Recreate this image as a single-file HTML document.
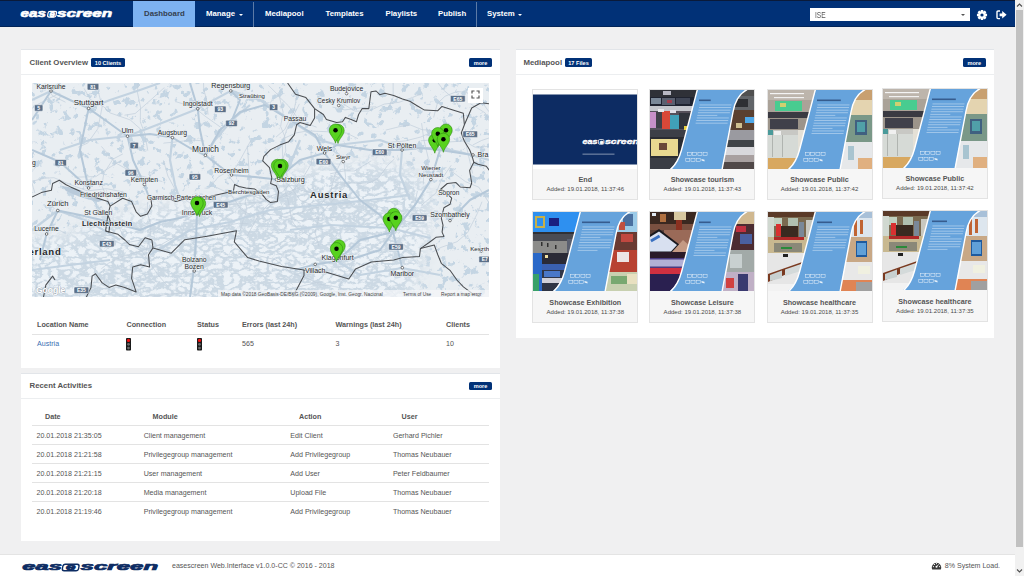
<!DOCTYPE html>
<html><head><meta charset="utf-8">
<style>
*{box-sizing:border-box;margin:0;padding:0}
html,body{width:1024px;height:576px;overflow:hidden}
body{background:#f0f0f1;font-family:"Liberation Sans",sans-serif;color:#555;position:relative}
.a{position:absolute;white-space:nowrap}
#nav{position:absolute;left:0;top:0;width:1015px;height:27px;background:#013177;border-top:1px solid #0a1a3a;border-bottom:1px solid #012458}
.ni{position:absolute;top:0;height:26px;line-height:26px;font-size:7.8px;font-weight:bold;color:#fff}
.sep{position:absolute;top:1px;width:1px;height:25px;background:#5c7aa6}
.caret{position:absolute;width:0;height:0;border-left:2.3px solid transparent;border-right:2.3px solid transparent;border-top:2.6px solid #fff}
.panel{position:absolute;background:#fff;border-top:1px solid #e2e5e9}
.ptitle{position:absolute;font-size:7.8px;font-weight:bold;color:#555;white-space:nowrap}
.badge{position:absolute;background:#013177;color:#fff;font-size:5.6px;font-weight:bold;border-radius:1.5px;text-align:center;white-space:nowrap}
.phr{position:absolute;left:0;right:0;height:1px;background:#eceef0}
.more{position:absolute;background:#013177;color:#fff;font-size:5.6px;font-weight:bold;border-radius:1.5px;text-align:center;line-height:10px}
.th{position:absolute;font-size:7.2px;font-weight:bold;color:#555;white-space:nowrap}
.td{position:absolute;font-size:7.1px;color:#555;white-space:nowrap}
.tl{position:absolute;height:1px;background:#e3e3e3}
.card{position:absolute;width:106px;height:111.5px;border:1px solid #e3e3e3;background:#f6f6f6}
.cap{position:absolute;left:0;top:79px;width:104px;height:31.5px}
.ct{position:absolute;left:0;width:104px;top:6.8px;text-align:center;font-size:7.2px;font-weight:bold;color:#555;white-space:nowrap}
.cd{position:absolute;left:0;width:104px;top:17.6px;text-align:center;font-size:6.05px;color:#4a4a4a;white-space:nowrap}
#footer{position:absolute;left:0;top:554px;width:1015px;height:22px;background:#fff;border-top:1px solid #e4e4e4}
#sb{position:absolute;left:1015px;top:0;width:9px;height:576px;background:#f1f1f1}
</style></head><body>

<!-- NAVBAR -->
<div id="nav">
  <svg class="a" style="left:0;top:0" width="130" height="26" viewBox="0 0 130 26">
    <g font-family="Liberation Sans" font-weight="bold" font-style="italic" font-size="11.2" fill="#fff" stroke="#fff" stroke-width="0.6">
    <text x="20.6" y="16.1" textLength="25.4" lengthAdjust="spacingAndGlyphs">eas</text>
    <text x="49.4" y="15.6" font-size="8.6" textLength="5.4" lengthAdjust="spacingAndGlyphs">e</text>
    <text x="57" y="16.1" textLength="55.2" lengthAdjust="spacingAndGlyphs">screen</text>
    </g>
    <rect x="47.8" y="10.3" width="8.4" height="5.8" rx="1.8" fill="none" stroke="#fff" stroke-width="1.2" transform="skewX(-10) translate(2.4,0)"/>
  </svg>
  <div style="position:absolute;left:133px;top:0;width:62px;height:26px;background:#7db2f1"></div>
  <div class="ni" style="left:144px;color:#34404f">Dashboard</div>
  <div class="ni" style="left:206px">Manage</div>
  <div class="caret" style="left:238.5px;top:13px"></div>
  <div class="sep" style="left:253px"></div>
  <div class="ni" style="left:265px">Mediapool</div>
  <div class="ni" style="left:325.5px">Templates</div>
  <div class="ni" style="left:385.5px">Playlists</div>
  <div class="ni" style="left:438px">Publish</div>
  <div class="sep" style="left:476px"></div>
  <div class="ni" style="left:487px">System</div>
  <div class="caret" style="left:517.5px;top:13px"></div>
  <div style="position:absolute;left:810px;top:7px;width:160px;height:13.3px;background:#fff"></div>
  <div class="a" style="left:814.5px;top:8.2px;line-height:13px;font-size:8.2px;color:#555;transform:scaleX(0.81);transform-origin:0 0">ISE</div>
  <div class="caret" style="left:961px;top:13px;border-top-color:#555"></div>
  <svg class="a" style="left:976.2px;top:8.2px" width="12" height="12" viewBox="0 0 12 12"><g transform="translate(6,6)" fill="#fff"><polygon points="5.07,-1.13 5.07,1.13 3.65,1.37 3.55,1.61 4.39,2.79 2.79,4.39 1.61,3.55 1.37,3.65 1.13,5.07 -1.13,5.07 -1.37,3.65 -1.61,3.55 -2.79,4.39 -4.39,2.79 -3.55,1.61 -3.65,1.37 -5.07,1.13 -5.07,-1.13 -3.65,-1.37 -3.55,-1.61 -4.39,-2.79 -2.79,-4.39 -1.61,-3.55 -1.37,-3.65 -1.13,-5.07 1.13,-5.07 1.37,-3.65 1.61,-3.55 2.79,-4.39 4.39,-2.79 3.55,-1.61 3.65,-1.37"/><circle r="1.6" fill="#013177"/></g></svg>
  <svg class="a" style="left:996px;top:8.9px" width="12" height="10" viewBox="0 0 12 10"><path d="M4,1 H2 Q1,1 1,2 V7.6 Q1,8.6 2,8.6 H4" fill="none" stroke="#fff" stroke-width="1.4"/><path d="M3.6,3.4 H6.2 V1 L10.6,4.8 L6.2,8.6 V6.2 H3.6 Z" fill="#fff"/></svg>
</div>

<!-- SCROLLBAR -->
<div id="sb">
  <div style="position:absolute;left:1px;top:10px;width:7px;height:537px;background:#c1c1c1"></div>
  <svg class="a" style="left:0;top:2px" width="9" height="6" viewBox="0 0 9 6"><path d="M2,4.5 L4.5,2 L7,4.5" fill="none" stroke="#505050" stroke-width="1.1"/></svg>
  <svg class="a" style="left:0;top:568px" width="9" height="6" viewBox="0 0 9 6"><path d="M2,1.5 L4.5,4 L7,1.5" fill="none" stroke="#505050" stroke-width="1.1"/></svg>
</div>

<!-- CLIENT OVERVIEW PANEL -->
<div class="panel" style="left:21px;top:49px;width:479px;height:319px">
  <div class="ptitle" style="left:8.5px;top:8px">Client Overview</div>
  <div class="badge" style="left:70px;top:8px;width:34px;height:9px;line-height:10px">10 Clients</div>
  <div class="more" style="left:448px;top:8px;width:23px;height:9px">more</div>
  <div class="phr" style="top:24px"></div>
  <div id="map" style="position:absolute;left:11px;top:33px;width:457px;height:214px;background:#dfe6ec;overflow:hidden"><svg width="457" height="214" viewBox="0 0 457 214" style="position:absolute;left:0;top:0">
<defs>
<filter id="tex" x="0" y="0" width="457" height="214" filterUnits="userSpaceOnUse" color-interpolation-filters="sRGB">
 <feTurbulence type="fractalNoise" baseFrequency="0.13" numOctaves="4" seed="7" result="n"/>
 <feColorMatrix in="n" type="matrix" values="0 0 0 0 0.77  0 0 0 0 0.835  0 0 0 0 0.89  0 0 0 12 -7.1"/>
</filter>
<filter id="tex2" x="0" y="0" width="457" height="214" filterUnits="userSpaceOnUse" color-interpolation-filters="sRGB">
 <feTurbulence type="turbulence" baseFrequency="0.11 0.16" numOctaves="3" seed="11" result="n"/>
 <feColorMatrix in="n" type="matrix" values="0 0 0 0 0.96  0 0 0 0 0.975  0 0 0 0 0.99  0 0 0 5 -0.95"/>
</filter>
<filter id="blur6"><feGaussianBlur stdDeviation="8"/></filter>
<mask id="am" maskUnits="userSpaceOnUse" x="0" y="0" width="457" height="214"><polygon points="-12.0,157.0 38.0,153.0 68.0,139.0 118.0,125.0 198.0,117.0 230.0,109.0 253.0,92.0 298.0,83.0 348.0,81.0 383.0,89.0 400.0,112.0 393.0,157.0 378.0,227.0 -12.0,227.0" fill="#fff" filter="url(#blur6)"/></mask>
<mask id="pm" maskUnits="userSpaceOnUse" x="0" y="0" width="457" height="214"><rect width="457" height="214" fill="#fff"/><polygon points="-12.0,157.0 38.0,153.0 68.0,139.0 118.0,125.0 198.0,117.0 230.0,109.0 253.0,92.0 298.0,83.0 348.0,81.0 383.0,89.0 400.0,112.0 393.0,157.0 378.0,227.0 -12.0,227.0" fill="#000" filter="url(#blur6)"/></mask>
<g id="pin"><path d="M0,0 C-0.8,-4.5 -6.2,-8.5 -6.2,-13 A6.2,6.2 0 1,1 6.2,-13 C6.2,-8.5 0.8,-4.5 0,0 Z" fill="#58d21f" stroke="#2f8a14" stroke-width="0.6"/><circle cx="0" cy="-13" r="2.25" fill="#000"/></g>
</defs>
<rect width="457" height="214" fill="#e9eef2"/>
<g mask="url(#pm)"><rect width="457" height="214" filter="url(#tex)"/></g>
<g mask="url(#am)"><rect width="457" height="214" fill="#ccd9e4"/><rect width="457" height="214" filter="url(#tex2)" opacity="0.8"/></g>
<polygon points="30.0,103.0 43.0,105.0 63.0,113.0 72.0,117.0 66.0,119.0 48.0,114.0 34.0,108.0" fill="#b9cada"/>
<polyline points="287.1,163.6 283.1,149.6 287.3,133.1 293.6,125.9 301.0,117.1 311.8,105.3 313.6,94.4 311.4,73.7" fill="none" stroke="#c2cfdb" stroke-width="0.7" stroke-linejoin="round"/>
<polyline points="355.3,27.3 361.2,14.4 361.1,-7.2 350.5,-22.7 350.0,-33.0" fill="none" stroke="#c2cfdb" stroke-width="0.7" stroke-linejoin="round"/>
<polyline points="69.4,63.4 83.4,79.8 102.2,90.2 110.0,93.2 130.4,98.6" fill="none" stroke="#c2cfdb" stroke-width="0.7" stroke-linejoin="round"/>
<polyline points="115.8,67.7 112.8,50.4 108.3,38.9 108.5,24.2 105.5,9.8 105.8,1.0 110.5,-5.8 126.2,-18.1" fill="none" stroke="#c2cfdb" stroke-width="0.7" stroke-linejoin="round"/>
<polyline points="-1.4,174.3 -14.4,180.3 -30.9,183.4 -39.9,180.0 -59.3,178.8 -74.5,178.7 -84.7,173.3 -99.4,166.4" fill="none" stroke="#c2cfdb" stroke-width="0.7" stroke-linejoin="round"/>
<polyline points="362.5,75.9 355.7,82.3 346.0,95.6 334.4,101.0 318.8,99.9 306.5,101.8 298.7,106.5" fill="none" stroke="#c2cfdb" stroke-width="0.7" stroke-linejoin="round"/>
<polyline points="61.0,151.3 69.9,153.4 89.5,160.8 107.5,157.2 118.1,152.8" fill="none" stroke="#c2cfdb" stroke-width="0.7" stroke-linejoin="round"/>
<polyline points="300.5,24.1 312.9,26.9 334.4,24.2 344.3,23.8" fill="none" stroke="#c2cfdb" stroke-width="0.7" stroke-linejoin="round"/>
<polyline points="417.6,86.8 433.5,98.7 446.8,104.2 457.7,120.8 457.8,135.2 458.2,153.4" fill="none" stroke="#c2cfdb" stroke-width="0.7" stroke-linejoin="round"/>
<polyline points="218.5,58.1 209.1,75.2 203.8,84.2 186.2,94.0 176.8,105.6" fill="none" stroke="#c2cfdb" stroke-width="0.7" stroke-linejoin="round"/>
<polyline points="235.7,118.3 218.1,111.6 203.8,102.0 195.7,91.7" fill="none" stroke="#c2cfdb" stroke-width="0.7" stroke-linejoin="round"/>
<polyline points="326.0,55.7 314.6,50.1 294.7,48.7 275.9,47.9 264.2,49.9 250.5,56.0" fill="none" stroke="#c2cfdb" stroke-width="0.7" stroke-linejoin="round"/>
<polyline points="311.3,73.4 303.1,91.2 298.1,110.4 286.7,123.9 266.3,130.2 251.5,134.5" fill="none" stroke="#c2cfdb" stroke-width="0.7" stroke-linejoin="round"/>
<polyline points="69.3,185.8 76.5,180.2 88.9,174.2 109.0,167.7 129.2,161.6 142.8,153.7 154.6,152.6" fill="none" stroke="#c2cfdb" stroke-width="0.7" stroke-linejoin="round"/>
<polyline points="465.1,35.8 456.8,28.5 446.9,14.8 433.4,9.2 424.7,8.6 413.1,13.2 405.3,20.5 401.6,34.5" fill="none" stroke="#c2cfdb" stroke-width="0.7" stroke-linejoin="round"/>
<polyline points="171.4,133.2 162.4,123.4 145.4,110.6 135.8,92.9 131.6,77.8" fill="none" stroke="#c2cfdb" stroke-width="0.7" stroke-linejoin="round"/>
<polyline points="450.0,118.7 445.3,130.5 435.6,149.6 425.1,158.7 409.1,164.4 400.3,169.1" fill="none" stroke="#c2cfdb" stroke-width="0.7" stroke-linejoin="round"/>
<polyline points="274.3,121.9 287.0,120.1 294.6,122.7 310.4,120.5 320.4,120.5" fill="none" stroke="#c2cfdb" stroke-width="0.7" stroke-linejoin="round"/>
<polyline points="290.3,198.6 275.7,201.7 258.2,205.8 239.6,213.1 228.1,224.6 217.3,230.4 211.5,236.3" fill="none" stroke="#c2cfdb" stroke-width="0.7" stroke-linejoin="round"/>
<polyline points="440.8,62.0 449.5,57.5 462.9,53.0 478.8,42.6 486.9,41.2" fill="none" stroke="#c2cfdb" stroke-width="0.7" stroke-linejoin="round"/>
<polyline points="244.0,54.1 252.9,46.4 262.2,26.6 265.4,10.4" fill="none" stroke="#c2cfdb" stroke-width="0.7" stroke-linejoin="round"/>
<polyline points="216.4,140.9 206.7,140.2 189.1,143.6 170.9,144.6" fill="none" stroke="#c2cfdb" stroke-width="0.7" stroke-linejoin="round"/>
<polyline points="2.7,71.8 -3.5,66.7 -16.2,54.5 -33.1,49.4 -47.0,50.5 -62.7,45.9 -81.2,35.3 -96.6,22.5" fill="none" stroke="#c2cfdb" stroke-width="0.7" stroke-linejoin="round"/>
<polyline points="391.3,101.3 392.0,86.8 396.3,75.4 391.9,57.0 389.6,40.1" fill="none" stroke="#c2cfdb" stroke-width="0.7" stroke-linejoin="round"/>
<polyline points="215.4,62.8 216.8,84.3 217.0,98.3 216.8,107.0 213.2,118.2 214.9,126.9 210.6,138.8 208.4,147.5" fill="none" stroke="#c2cfdb" stroke-width="0.7" stroke-linejoin="round"/>
<polyline points="183.3,103.9 198.7,111.1 208.7,126.0 219.1,132.3" fill="none" stroke="#c2cfdb" stroke-width="0.7" stroke-linejoin="round"/>
<polyline points="427.9,25.0 423.5,17.3 411.5,7.0 400.1,-7.5 387.3,-17.1 373.9,-19.5 366.2,-22.2" fill="none" stroke="#c2cfdb" stroke-width="0.7" stroke-linejoin="round"/>
<polyline points="33.6,150.4 21.7,144.5 4.0,145.9 -10.8,153.8 -29.1,163.5 -44.4,170.4" fill="none" stroke="#c2cfdb" stroke-width="0.7" stroke-linejoin="round"/>
<polyline points="115.6,119.1 115.1,129.0 118.7,141.7 118.6,152.2 114.0,168.7 118.0,185.6" fill="none" stroke="#c2cfdb" stroke-width="0.7" stroke-linejoin="round"/>
<polyline points="33.5,19.2 20.5,12.8 15.5,4.8 7.7,-8.8 -4.5,-24.5" fill="none" stroke="#c2cfdb" stroke-width="0.7" stroke-linejoin="round"/>
<polyline points="440.6,90.5 436.0,70.2 433.5,59.6 433.6,46.3" fill="none" stroke="#c2cfdb" stroke-width="0.7" stroke-linejoin="round"/>
<polyline points="388.7,57.8 401.9,56.7 414.7,59.1 431.5,58.0 443.1,64.2 464.9,62.8" fill="none" stroke="#c2cfdb" stroke-width="0.7" stroke-linejoin="round"/>
<polyline points="92.5,32.2 103.2,30.5 118.6,17.1 132.4,4.5" fill="none" stroke="#c2cfdb" stroke-width="0.7" stroke-linejoin="round"/>
<polyline points="-9.8,100.0 2.5,97.7 12.9,95.2 21.9,94.7 40.5,102.4 55.3,107.9 74.6,105.7 91.7,109.0" fill="none" stroke="#c2cfdb" stroke-width="0.7" stroke-linejoin="round"/>
<polyline points="5.8,199.7 2.6,208.0 5.5,222.1 3.3,232.0 -3.3,242.7 -8.8,252.6" fill="none" stroke="#c2cfdb" stroke-width="0.7" stroke-linejoin="round"/>
<polyline points="463.9,-2.2 459.2,-9.9 445.9,-26.9 436.7,-35.3 427.6,-43.0 417.6,-58.1 408.1,-64.3 393.1,-79.2" fill="none" stroke="#c2cfdb" stroke-width="0.7" stroke-linejoin="round"/>
<polyline points="298.1,90.8 312.1,87.9 322.5,88.0 339.3,77.8" fill="none" stroke="#c2cfdb" stroke-width="0.7" stroke-linejoin="round"/>
<polyline points="389.4,122.3 404.1,109.9 409.6,96.3 419.2,82.3" fill="none" stroke="#c2cfdb" stroke-width="0.7" stroke-linejoin="round"/>
<polyline points="227.3,172.9 243.8,176.8 260.2,190.3 277.1,195.9 286.5,200.9 307.2,204.4 315.2,209.0" fill="none" stroke="#c2cfdb" stroke-width="0.7" stroke-linejoin="round"/>
<polyline points="459.9,27.9 471.4,36.2 484.0,42.3 494.9,53.0 502.6,55.6" fill="none" stroke="#c2cfdb" stroke-width="0.7" stroke-linejoin="round"/>
<polyline points="350.7,151.1 358.8,145.4 374.0,134.1 382.2,123.2 385.4,108.0" fill="none" stroke="#c2cfdb" stroke-width="0.7" stroke-linejoin="round"/>
<polyline points="215.0,153.1 220.7,142.8 226.1,132.6 239.0,118.5 258.0,111.1 269.9,96.5 279.6,80.4 278.9,68.5" fill="none" stroke="#c2cfdb" stroke-width="0.7" stroke-linejoin="round"/>
<polyline points="438.5,20.8 453.1,29.9 461.3,46.1 463.9,57.6 461.9,70.8" fill="none" stroke="#c2cfdb" stroke-width="0.7" stroke-linejoin="round"/>
<polyline points="52.1,5.4 58.2,16.4 71.9,23.9 77.8,29.8 98.2,36.9 108.8,46.3" fill="none" stroke="#c2cfdb" stroke-width="0.7" stroke-linejoin="round"/>
<polyline points="113.1,212.6 126.2,212.9 134.3,211.4 153.8,209.8 162.9,211.5 173.1,213.8 185.7,220.4 196.0,236.5" fill="none" stroke="#c2cfdb" stroke-width="0.7" stroke-linejoin="round"/>
<polyline points="46.4,64.2 55.9,59.9 65.8,45.7 68.7,31.4 70.2,23.5 65.1,4.2 64.7,-6.7" fill="none" stroke="#c2cfdb" stroke-width="0.7" stroke-linejoin="round"/>
<polyline points="-9.5,202.7 -7.1,213.5 -2.0,223.0 3.2,234.9 4.4,246.2 7.7,257.3" fill="none" stroke="#c2cfdb" stroke-width="0.7" stroke-linejoin="round"/>
<polyline points="458.6,186.6 466.1,176.1 468.2,165.0 468.7,155.7 467.2,137.2 460.3,117.5 460.6,98.9 460.5,84.3" fill="none" stroke="#c2cfdb" stroke-width="0.7" stroke-linejoin="round"/>
<polyline points="244.6,11.3 256.4,22.8 268.1,38.2 284.6,44.2" fill="none" stroke="#c2cfdb" stroke-width="0.7" stroke-linejoin="round"/>
<polyline points="281.1,110.2 267.9,106.8 254.8,92.5 250.7,75.3 250.3,59.8 254.5,47.4 262.0,31.6 267.4,20.9" fill="none" stroke="#c2cfdb" stroke-width="0.7" stroke-linejoin="round"/>
<polyline points="27.1,10.4 8.2,20.0 -9.9,31.8 -18.3,51.0 -19.1,59.5 -10.7,79.3 -3.0,89.6 2.8,109.9" fill="none" stroke="#c2cfdb" stroke-width="0.7" stroke-linejoin="round"/>
<polyline points="278.9,121.5 268.3,117.4 259.1,104.8 253.6,99.0" fill="none" stroke="#c2cfdb" stroke-width="0.7" stroke-linejoin="round"/>
<polyline points="176.1,31.7 174.1,15.2 171.7,6.0 171.3,-9.7 174.3,-22.6" fill="none" stroke="#c2cfdb" stroke-width="0.7" stroke-linejoin="round"/>
<polyline points="413.0,39.8 407.1,46.7 398.5,49.6 388.9,54.0 373.4,57.9 356.5,59.4" fill="none" stroke="#c2cfdb" stroke-width="0.7" stroke-linejoin="round"/>
<polyline points="250.4,85.2 252.2,105.8 256.0,117.1 260.2,138.3 264.8,145.3 278.5,153.4 286.8,159.9" fill="none" stroke="#c2cfdb" stroke-width="0.7" stroke-linejoin="round"/>
<polyline points="80.8,129.1 77.5,120.9 69.9,102.7 71.8,90.4 81.0,76.1 90.9,70.9" fill="none" stroke="#c2cfdb" stroke-width="0.7" stroke-linejoin="round"/>
<polyline points="322.4,186.7 309.6,198.5 305.1,210.4 301.4,228.7" fill="none" stroke="#c2cfdb" stroke-width="0.7" stroke-linejoin="round"/>
<polyline points="264.3,93.2 250.6,109.1 234.6,114.2 225.5,111.9 216.8,113.9" fill="none" stroke="#c2cfdb" stroke-width="0.7" stroke-linejoin="round"/>
<polyline points="88.5,77.6 70.6,89.0 63.9,93.6 42.5,94.2" fill="none" stroke="#c2cfdb" stroke-width="0.7" stroke-linejoin="round"/>
<polyline points="53.3,-9.2 44.5,-7.3 26.5,-9.1 17.0,-7.7 4.2,-5.4 -16.5,-7.8" fill="none" stroke="#c2cfdb" stroke-width="0.7" stroke-linejoin="round"/>
<polyline points="172.3,58.0 160.2,57.0 140.4,59.3 131.7,60.1" fill="none" stroke="#c2cfdb" stroke-width="0.7" stroke-linejoin="round"/>
<polyline points="190.7,45.7 173.1,33.2 162.2,24.3 143.3,18.5" fill="none" stroke="#c2cfdb" stroke-width="0.7" stroke-linejoin="round"/>
<polyline points="398.1,47.3 390.0,46.7 378.0,41.8 366.6,43.9 353.7,47.1" fill="none" stroke="#c2cfdb" stroke-width="0.7" stroke-linejoin="round"/>
<polyline points="236.5,2.4 247.3,13.2 251.1,29.2 248.6,43.5 252.6,53.0 253.8,67.9 246.4,87.8" fill="none" stroke="#c2cfdb" stroke-width="0.7" stroke-linejoin="round"/>
<polyline points="305.3,134.7 286.5,135.1 266.5,137.8 246.4,132.4 224.5,129.9" fill="none" stroke="#c2cfdb" stroke-width="0.7" stroke-linejoin="round"/>
<polyline points="350.7,198.7 365.2,214.7 366.7,225.7 369.5,237.1 372.7,248.7" fill="none" stroke="#c2cfdb" stroke-width="0.7" stroke-linejoin="round"/>
<polyline points="307.9,18.9 322.9,28.1 336.6,28.1 352.2,21.1 367.0,19.3 380.6,14.4 389.0,11.0" fill="none" stroke="#c2cfdb" stroke-width="0.7" stroke-linejoin="round"/>
<polyline points="164.0,134.8 173.1,130.9 185.4,128.1 195.7,121.7 216.1,119.8 228.0,119.6 240.0,113.2" fill="none" stroke="#c2cfdb" stroke-width="0.7" stroke-linejoin="round"/>
<polyline points="134.8,202.1 127.4,193.5 120.5,184.1 110.5,168.8 98.0,161.1 92.3,155.2 86.3,142.7" fill="none" stroke="#c2cfdb" stroke-width="0.7" stroke-linejoin="round"/>
<polyline points="230.5,132.9 237.2,123.7 252.7,110.5 267.4,104.7" fill="none" stroke="#c2cfdb" stroke-width="0.7" stroke-linejoin="round"/>
<polyline points="173.4,72.3 183.0,57.0 200.0,37.0 218.0,22.0" fill="none" stroke="#c3d3e1" stroke-width="2.2" stroke-linejoin="round"/>
<polyline points="140.4,54.6 138.0,77.0 143.0,102.0 148.0,117.0" fill="none" stroke="#c3d3e1" stroke-width="2.2" stroke-linejoin="round"/>
<polyline points="56.6,25.4 78.0,17.0 108.0,7.0 128.0,0.0" fill="none" stroke="#c3d3e1" stroke-width="2.2" stroke-linejoin="round"/>
<polyline points="0.0,17.0 19.0,8.0 28.0,0.0" fill="none" stroke="#c3d3e1" stroke-width="2.2" stroke-linejoin="round"/>
<polyline points="244.5,96.6 258.0,82.0 268.0,57.0" fill="none" stroke="#c3d3e1" stroke-width="2.2" stroke-linejoin="round"/>
<polyline points="370.0,67.0 368.0,92.0 378.0,117.0" fill="none" stroke="#c3d3e1" stroke-width="2.2" stroke-linejoin="round"/>
<polyline points="305.0,178.0 328.0,192.0 370.0,185.0 408.0,192.0" fill="none" stroke="#c3d3e1" stroke-width="2.2" stroke-linejoin="round"/>
<polyline points="28.0,67.0 58.0,57.0 95.5,53.0 117.0,45.0 135.0,38.0 165.8,25.8 180.0,18.0 198.8,7.9 228.0,17.0 263.0,40.0 288.0,57.0 305.0,62.0 348.0,57.0 370.0,65.0 408.0,65.0 428.0,69.0 457.0,77.0" fill="none" stroke="#c3d3e1" stroke-width="2.2" stroke-linejoin="round"/>
<polyline points="0.0,147.0 25.8,127.5 58.0,139.0 88.0,157.0" fill="none" stroke="#c3d3e1" stroke-width="2.2" stroke-linejoin="round"/>
<polyline points="118.0,172.0 158.0,147.0 198.0,139.0 238.0,127.0 288.0,122.0 338.0,117.0 378.0,112.0" fill="none" stroke="#c3d3e1" stroke-width="2.2" stroke-linejoin="round"/>
<polyline points="258.0,147.0 298.0,142.0 358.0,145.0 398.0,155.0" fill="none" stroke="#c3d3e1" stroke-width="2.2" stroke-linejoin="round"/>
<polyline points="0.0,187.0 38.0,182.0 78.0,177.0" fill="none" stroke="#c3d3e1" stroke-width="2.2" stroke-linejoin="round"/>
<polyline points="19.0,8.0 38.0,17.0 56.6,25.4 73.0,37.0 95.5,53.2 118.0,51.0 140.4,54.6 158.0,65.0 173.4,72.3 186.0,82.0 199.5,92.0 223.0,94.0 244.5,96.6" fill="none" stroke="#b5c8d9" stroke-width="2" stroke-linejoin="round"/>
<polyline points="244.5,96.6 268.0,77.0 292.6,70.0 305.0,62.0 338.0,67.0 370.1,67.0 388.0,65.0 408.0,67.0 441.0,72.0" fill="none" stroke="#b5c8d9" stroke-width="2" stroke-linejoin="round"/>
<polyline points="173.4,72.3 168.0,47.0 165.8,25.8 158.0,0.0" fill="none" stroke="#b5c8d9" stroke-width="2" stroke-linejoin="round"/>
<polyline points="173.4,72.3 188.0,47.0 208.0,29.0 233.0,22.0 263.0,40.0 283.0,52.0 292.6,70.0" fill="none" stroke="#b5c8d9" stroke-width="2" stroke-linejoin="round"/>
<polyline points="198.8,7.9 208.0,17.0 200.0,37.0" fill="none" stroke="#b5c8d9" stroke-width="2" stroke-linejoin="round"/>
<polyline points="95.5,53.2 101.0,77.0 112.3,101.5 118.0,117.0" fill="none" stroke="#b5c8d9" stroke-width="2" stroke-linejoin="round"/>
<polyline points="56.6,25.4 48.0,67.0 56.6,105.0" fill="none" stroke="#b5c8d9" stroke-width="2" stroke-linejoin="round"/>
<polyline points="408.0,67.0 398.9,96.6 383.0,122.0 361.0,149.0 348.0,167.0 323.0,175.0 305.0,178.0 283.2,181.4 263.0,187.0" fill="none" stroke="#b5c8d9" stroke-width="2" stroke-linejoin="round"/>
<polyline points="292.6,70.0 308.0,92.0 328.0,117.0 348.0,132.0 361.0,149.0" fill="none" stroke="#b5c8d9" stroke-width="2" stroke-linejoin="round"/>
<polyline points="165.0,129.0 188.0,122.0 218.0,112.0 230.0,107.0" fill="none" stroke="#b5c8d9" stroke-width="2" stroke-linejoin="round"/>
<polyline points="165.0,129.0 148.0,135.0 128.0,139.0 108.0,147.0 78.0,139.0 48.0,132.0 25.8,127.5" fill="none" stroke="#b5c8d9" stroke-width="2" stroke-linejoin="round"/>
<polyline points="165.0,129.0 164.0,157.0 162.2,184.0 158.0,214.0" fill="none" stroke="#b5c8d9" stroke-width="2" stroke-linejoin="round"/>
<polyline points="0.0,37.0 19.0,8.0 28.0,0.0" fill="none" stroke="#b5c8d9" stroke-width="2" stroke-linejoin="round"/>
<polyline points="25.8,127.5 14.6,151.0 8.0,177.0" fill="none" stroke="#b5c8d9" stroke-width="2" stroke-linejoin="round"/>
<polyline points="305.0,178.0 328.0,157.0 361.0,149.0" fill="none" stroke="#b5c8d9" stroke-width="2" stroke-linejoin="round"/>
<polyline points="370.3,184.7 361.0,149.0" fill="none" stroke="#b5c8d9" stroke-width="2" stroke-linejoin="round"/>
<polyline points="418.0,137.6 438.0,117.0 457.0,107.0" fill="none" stroke="#b5c8d9" stroke-width="2" stroke-linejoin="round"/>
<polyline points="0.0,67.0 28.0,79.0 56.6,105.0" fill="none" stroke="#b5c8d9" stroke-width="2" stroke-linejoin="round"/>
<polyline points="255.6,0.0 263.5,11.3 273.9,14.6 282.6,25.6" fill="none" stroke="#4b4e52" stroke-width="1.05" stroke-linejoin="round"/>
<polyline points="282.6,25.6 282.6,35.1 278.2,42.5 268.0,39.5 264.6,41.8 262.3,51.9 256.7,58.7 247.7,62.1 238.6,66.6 231.9,73.4 230.7,77.9 237.5,84.7 239.8,94.8 238.6,100.5 244.3,102.7 246.5,108.4 245.4,118.5 238.6,119.6 234.1,116.3 229.6,110.6 222.8,106.1 213.8,105.0 207.0,103.4 202.5,101.6 201.4,108.4 195.5,109.5 175.2,114.0 157.3,115.0 143.8,118.5 134.8,115.0 128.0,115.2 118.8,115.2 119.9,123.1 115.4,131.0 108.6,133.3 104.1,128.8 99.6,118.6 90.6,115.2 78.1,123.1" fill="none" stroke="#4b4e52" stroke-width="1.05" stroke-linejoin="round"/>
<polyline points="0.0,114.1 9.3,109.6 19.4,107.3 20.6,100.5 27.3,97.2 34.1,101.7 38.6,103.9 52.0,110.0 65.7,115.2 75.9,118.6 78.1,123.1 75.9,132.1 73.6,147.9" fill="none" stroke="#4b4e52" stroke-width="1.05" stroke-linejoin="round"/>
<polyline points="75.9,132.1 78.1,137.8 77.0,149.1 73.6,147.9" fill="none" stroke="#4b4e52" stroke-width="1.05" stroke-linejoin="round"/>
<polyline points="282.6,25.6 291.4,31.5 294.4,36.6 304.6,39.5 310.5,38.8 313.4,34.4 319.2,36.6 324.4,38.8 326.6,31.5 330.2,25.6 336.8,25.6 339.0,8.8 344.1,8.0 347.8,11.7 352.9,10.2 361.7,12.4 370.5,16.1 377.8,18.3 385.1,22.7 392.5,27.1 405.6,27.8 410.0,23.4 420.9,27.0 431.3,30.2 432.4,41.7 429.3,50.0 432.4,58.3 437.6,66.7 439.7,71.9 441.8,79.2 437.6,87.5 439.7,100.0 438.0,104.8 428.3,104.0 424.0,99.6 415.3,100.5 408.4,106.5 412.7,108.3 419.7,115.2 418.0,121.3 411.9,124.8 409.3,135.2 411.0,142.1 410.1,149.1 411.9,153.4 404.0,154.3 397.1,159.5 388.4,165.6 387.5,173.4 370.8,174.6 361.8,176.9 339.3,179.1 323.6,185.9 316.8,196.0 294.4,189.2 272.0,187.0 249.5,183.6 227.0,178.0 215.7,174.6 202.3,158.9 204.5,147.7 175.2,153.3 152.8,156.7 139.3,170.2 121.0,164.9 119.9,157.0 113.1,154.7 106.4,163.7 97.3,161.5 92.8,157.0 86.0,151.3 73.6,147.9" fill="none" stroke="#4b4e52" stroke-width="1.05" stroke-linejoin="round"/>
<polyline points="121.0,164.9 116.5,171.7 117.6,184.0 108.6,181.8 100.7,184.0 99.6,195.4 104.1,208.9 92.8,204.4 83.8,202.1 77.0,204.4 70.2,199.9 63.5,190.8 60.1,193.1 59.0,204.4 54.4,214.0" fill="none" stroke="#4b4e52" stroke-width="1.05" stroke-linejoin="round"/>
<polyline points="11.5,214.0 13.8,202.1 20.6,193.1 23.0,197.0" fill="none" stroke="#4b4e52" stroke-width="1.05" stroke-linejoin="round"/>
<polyline points="432.4,41.7 439.7,25.0 449.0,19.8 457.4,20.8" fill="none" stroke="#4b4e52" stroke-width="1.05" stroke-linejoin="round"/>
<polyline points="441.8,79.2 445.9,81.3 454.3,83.3 457.4,87.5" fill="none" stroke="#4b4e52" stroke-width="1.05" stroke-linejoin="round"/>
<polyline points="388.4,165.6 402.3,162.1 405.8,171.7 409.3,180.3 418.0,187.3 424.9,197.0 431.4,203.8 440.4,210.6 448.0,214.0" fill="none" stroke="#4b4e52" stroke-width="1.05" stroke-linejoin="round"/>
<polyline points="260.7,214.0 272.0,192.6 272.0,187.0" fill="none" stroke="#4b4e52" stroke-width="1.05" stroke-linejoin="round"/>
<rect x="55.2" y="0.6" width="11.6" height="6.4" rx="1" fill="#5b7089" stroke="#fff" stroke-width="0.5"/>
<text x="61.0" y="5.8" font-family="Liberation Sans" font-size="5" font-weight="bold" fill="#fff" text-anchor="middle">81</text>
<rect x="2.5" y="21.8" width="8.4" height="6.4" rx="1" fill="#5b7089" stroke="#fff" stroke-width="0.5"/>
<text x="6.7" y="27.0" font-family="Liberation Sans" font-size="5" font-weight="bold" fill="#fff" text-anchor="middle">5</text>
<rect x="182.5" y="23.1" width="11.6" height="6.4" rx="1" fill="#5b7089" stroke="#fff" stroke-width="0.5"/>
<text x="188.3" y="28.3" font-family="Liberation Sans" font-size="5" font-weight="bold" fill="#fff" text-anchor="middle">93</text>
<rect x="193.7" y="37.2" width="11.6" height="6.4" rx="1" fill="#5b7089" stroke="#fff" stroke-width="0.5"/>
<text x="199.5" y="42.4" font-family="Liberation Sans" font-size="5" font-weight="bold" fill="#fff" text-anchor="middle">92</text>
<rect x="98.0" y="59.3" width="8.4" height="6.4" rx="1" fill="#5b7089" stroke="#fff" stroke-width="0.5"/>
<text x="102.2" y="64.5" font-family="Liberation Sans" font-size="5" font-weight="bold" fill="#fff" text-anchor="middle">7</text>
<rect x="22.9" y="76.5" width="11.6" height="6.4" rx="1" fill="#5b7089" stroke="#fff" stroke-width="0.5"/>
<text x="28.7" y="81.7" font-family="Liberation Sans" font-size="5" font-weight="bold" fill="#fff" text-anchor="middle">81</text>
<rect x="93.0" y="86.6" width="11.6" height="6.4" rx="1" fill="#5b7089" stroke="#fff" stroke-width="0.5"/>
<text x="98.8" y="91.8" font-family="Liberation Sans" font-size="5" font-weight="bold" fill="#fff" text-anchor="middle">96</text>
<rect x="157.1" y="90.7" width="11.6" height="6.4" rx="1" fill="#5b7089" stroke="#fff" stroke-width="0.5"/>
<text x="162.9" y="95.9" font-family="Liberation Sans" font-size="5" font-weight="bold" fill="#fff" text-anchor="middle">95</text>
<rect x="237.4" y="21.1" width="8.4" height="6.4" rx="1" fill="#5b7089" stroke="#fff" stroke-width="0.5"/>
<text x="241.6" y="26.3" font-family="Liberation Sans" font-size="5" font-weight="bold" fill="#fff" text-anchor="middle">3</text>
<rect x="284.1" y="75.4" width="14.8" height="6.4" rx="1" fill="#5b7089" stroke="#fff" stroke-width="0.5"/>
<text x="291.5" y="80.6" font-family="Liberation Sans" font-size="5" font-weight="bold" fill="#fff" text-anchor="middle">E60</text>
<rect x="340.3" y="66.0" width="14.8" height="6.4" rx="1" fill="#5b7089" stroke="#fff" stroke-width="0.5"/>
<text x="347.7" y="71.2" font-family="Liberation Sans" font-size="5" font-weight="bold" fill="#fff" text-anchor="middle">E60</text>
<rect x="418.4" y="12.5" width="14.8" height="6.4" rx="1" fill="#5b7089" stroke="#fff" stroke-width="0.5"/>
<text x="425.8" y="17.7" font-family="Liberation Sans" font-size="5" font-weight="bold" fill="#fff" text-anchor="middle">E65</text>
<rect x="430.8" y="48.0" width="14.8" height="6.4" rx="1" fill="#5b7089" stroke="#fff" stroke-width="0.5"/>
<text x="438.2" y="53.2" font-family="Liberation Sans" font-size="5" font-weight="bold" fill="#fff" text-anchor="middle">E65</text>
<rect x="67.4" y="157.5" width="14.8" height="6.4" rx="1" fill="#5b7089" stroke="#fff" stroke-width="0.5"/>
<text x="74.8" y="162.7" font-family="Liberation Sans" font-size="5" font-weight="bold" fill="#fff" text-anchor="middle">E43</text>
<rect x="181.3" y="118.6" width="14.8" height="6.4" rx="1" fill="#5b7089" stroke="#fff" stroke-width="0.5"/>
<text x="188.7" y="123.8" font-family="Liberation Sans" font-size="5" font-weight="bold" fill="#fff" text-anchor="middle">E45</text>
<rect x="42.0" y="204.0" width="14.8" height="6.4" rx="1" fill="#5b7089" stroke="#fff" stroke-width="0.5"/>
<text x="49.4" y="209.2" font-family="Liberation Sans" font-size="5" font-weight="bold" fill="#fff" text-anchor="middle">E35</text>
<rect x="380.2" y="131.7" width="14.8" height="6.4" rx="1" fill="#5b7089" stroke="#fff" stroke-width="0.5"/>
<text x="387.6" y="136.9" font-family="Liberation Sans" font-size="5" font-weight="bold" fill="#fff" text-anchor="middle">E59</text>
<rect x="356.6" y="160.7" width="14.8" height="6.4" rx="1" fill="#5b7089" stroke="#fff" stroke-width="0.5"/>
<text x="364.0" y="165.9" font-family="Liberation Sans" font-size="5" font-weight="bold" fill="#fff" text-anchor="middle">E59</text>
<rect x="446.9" y="173.2" width="11.6" height="6.4" rx="1" fill="#5b7089" stroke="#fff" stroke-width="0.5"/>
<text x="452.7" y="178.4" font-family="Liberation Sans" font-size="5" font-weight="bold" fill="#fff" text-anchor="middle">E7</text>
<circle cx="19.0" cy="8.0" r="1.3" fill="#fff" stroke="#444" stroke-width="0.7"/>
<circle cx="56.6" cy="25.4" r="1.3" fill="#fff" stroke="#444" stroke-width="0.7"/>
<circle cx="198.8" cy="7.9" r="1.3" fill="#fff" stroke="#444" stroke-width="0.7"/>
<circle cx="220.0" cy="12.8" r="1.3" fill="#fff" stroke="#444" stroke-width="0.7"/>
<circle cx="165.8" cy="25.8" r="1.3" fill="#fff" stroke="#444" stroke-width="0.7"/>
<circle cx="95.5" cy="53.2" r="1.3" fill="#fff" stroke="#444" stroke-width="0.7"/>
<circle cx="140.4" cy="54.6" r="1.3" fill="#fff" stroke="#444" stroke-width="0.7"/>
<circle cx="173.4" cy="72.3" r="1.3" fill="#fff" stroke="#444" stroke-width="0.7"/>
<circle cx="199.5" cy="92.0" r="1.3" fill="#fff" stroke="#444" stroke-width="0.7"/>
<circle cx="112.3" cy="101.5" r="1.3" fill="#fff" stroke="#444" stroke-width="0.7"/>
<circle cx="56.6" cy="105.0" r="1.3" fill="#fff" stroke="#444" stroke-width="0.7"/>
<circle cx="25.8" cy="127.5" r="1.3" fill="#fff" stroke="#444" stroke-width="0.7"/>
<circle cx="14.6" cy="151.0" r="1.3" fill="#fff" stroke="#444" stroke-width="0.7"/>
<circle cx="162.2" cy="188.0" r="1.3" fill="#fff" stroke="#444" stroke-width="0.7"/>
<circle cx="314.6" cy="10.6" r="1.3" fill="#fff" stroke="#444" stroke-width="0.7"/>
<circle cx="306.7" cy="22.5" r="1.3" fill="#fff" stroke="#444" stroke-width="0.7"/>
<circle cx="292.6" cy="70.0" r="1.3" fill="#fff" stroke="#444" stroke-width="0.7"/>
<circle cx="311.2" cy="78.6" r="1.3" fill="#fff" stroke="#444" stroke-width="0.7"/>
<circle cx="370.1" cy="67.0" r="1.3" fill="#fff" stroke="#444" stroke-width="0.7"/>
<circle cx="398.9" cy="96.6" r="1.3" fill="#fff" stroke="#444" stroke-width="0.7"/>
<circle cx="441.0" cy="71.9" r="1.3" fill="#fff" stroke="#444" stroke-width="0.7"/>
<circle cx="244.5" cy="96.6" r="1.3" fill="#fff" stroke="#444" stroke-width="0.7"/>
<circle cx="418.0" cy="137.6" r="1.3" fill="#fff" stroke="#444" stroke-width="0.7"/>
<circle cx="283.2" cy="181.4" r="1.3" fill="#fff" stroke="#444" stroke-width="0.7"/>
<circle cx="370.3" cy="184.7" r="1.3" fill="#fff" stroke="#444" stroke-width="0.7"/>
<circle cx="449.4" cy="168.0" r="1.3" fill="#fff" stroke="#444" stroke-width="0.7"/>
<circle cx="70.0" cy="111.0" r="1.3" fill="#fff" stroke="#444" stroke-width="0.7"/>
<circle cx="66.0" cy="129.0" r="1.3" fill="#fff" stroke="#444" stroke-width="0.7"/>
<text x="19.0" y="5.5" font-family="Liberation Sans" font-size="6.82" font-weight="normal" letter-spacing="0" fill="#26292c" text-anchor="middle" stroke="#eef2f5" stroke-width="1.1" paint-order="stroke" stroke-linejoin="round">Karlsruhe</text>
<text x="56.6" y="22.0" font-family="Liberation Sans" font-size="7.92" font-weight="normal" letter-spacing="0" fill="#26292c" text-anchor="middle" stroke="#eef2f5" stroke-width="1.1" paint-order="stroke" stroke-linejoin="round">Stuttgart</text>
<text x="198.8" y="4.8" font-family="Liberation Sans" font-size="7.15" font-weight="normal" letter-spacing="0" fill="#26292c" text-anchor="middle" stroke="#eef2f5" stroke-width="1.1" paint-order="stroke" stroke-linejoin="round">Regensburg</text>
<text x="220.0" y="14.5" font-family="Liberation Sans" font-size="6.05" font-weight="normal" letter-spacing="0" fill="#26292c" text-anchor="middle" stroke="#eef2f5" stroke-width="1.1" paint-order="stroke" stroke-linejoin="round">Straubing</text>
<text x="165.8" y="23.0" font-family="Liberation Sans" font-size="6.82" font-weight="normal" letter-spacing="0" fill="#26292c" text-anchor="middle" stroke="#eef2f5" stroke-width="1.1" paint-order="stroke" stroke-linejoin="round">Ingolstadt</text>
<text x="95.5" y="49.8" font-family="Liberation Sans" font-size="6.82" font-weight="normal" letter-spacing="0" fill="#26292c" text-anchor="middle" stroke="#eef2f5" stroke-width="1.1" paint-order="stroke" stroke-linejoin="round">Ulm</text>
<text x="140.4" y="52.0" font-family="Liberation Sans" font-size="6.82" font-weight="normal" letter-spacing="0" fill="#26292c" text-anchor="middle" stroke="#eef2f5" stroke-width="1.1" paint-order="stroke" stroke-linejoin="round">Augsburg</text>
<text x="173.4" y="69.0" font-family="Liberation Sans" font-size="8.36" font-weight="normal" letter-spacing="0" fill="#26292c" text-anchor="middle" stroke="#eef2f5" stroke-width="1.1" paint-order="stroke" stroke-linejoin="round">Munich</text>
<text x="199.5" y="89.8" font-family="Liberation Sans" font-size="6.82" font-weight="normal" letter-spacing="0" fill="#26292c" text-anchor="middle" stroke="#eef2f5" stroke-width="1.1" paint-order="stroke" stroke-linejoin="round">Rosenheim</text>
<text x="112.3" y="99.0" font-family="Liberation Sans" font-size="6.82" font-weight="normal" letter-spacing="0" fill="#26292c" text-anchor="middle" stroke="#eef2f5" stroke-width="1.1" paint-order="stroke" stroke-linejoin="round">Kempten</text>
<text x="56.6" y="102.0" font-family="Liberation Sans" font-size="6.82" font-weight="normal" letter-spacing="0" fill="#26292c" text-anchor="middle" stroke="#eef2f5" stroke-width="1.1" paint-order="stroke" stroke-linejoin="round">Konstanz</text>
<text x="71.4" y="113.8" font-family="Liberation Sans" font-size="6.82" font-weight="normal" letter-spacing="0" fill="#26292c" text-anchor="middle" stroke="#eef2f5" stroke-width="1.1" paint-order="stroke" stroke-linejoin="round">Friedrichshafen</text>
<text x="25.8" y="123.0" font-family="Liberation Sans" font-size="7.7" font-weight="normal" letter-spacing="0" fill="#26292c" text-anchor="middle" stroke="#eef2f5" stroke-width="1.1" paint-order="stroke" stroke-linejoin="round">Zürich</text>
<text x="66.3" y="131.5" font-family="Liberation Sans" font-size="6.82" font-weight="normal" letter-spacing="0" fill="#26292c" text-anchor="middle" stroke="#eef2f5" stroke-width="1.1" paint-order="stroke" stroke-linejoin="round">St Gallen</text>
<text x="75.3" y="142.8" font-family="Liberation Sans" font-size="7.26" font-weight="bold" letter-spacing="0.3" fill="#26292c" text-anchor="middle" stroke="#eef2f5" stroke-width="1.1" paint-order="stroke" stroke-linejoin="round">Liechtenstein</text>
<text x="14.6" y="147.5" font-family="Liberation Sans" font-size="6.82" font-weight="normal" letter-spacing="0" fill="#26292c" text-anchor="middle" stroke="#eef2f5" stroke-width="1.1" paint-order="stroke" stroke-linejoin="round">Lucerne</text>
<text x="162.2" y="179.3" font-family="Liberation Sans" font-size="6.82" font-weight="normal" letter-spacing="0" fill="#26292c" text-anchor="middle" stroke="#eef2f5" stroke-width="1.1" paint-order="stroke" stroke-linejoin="round">Bolzano</text>
<text x="162.2" y="186.0" font-family="Liberation Sans" font-size="6.82" font-weight="normal" letter-spacing="0" fill="#26292c" text-anchor="middle" stroke="#eef2f5" stroke-width="1.1" paint-order="stroke" stroke-linejoin="round">Bozen</text>
<text x="149.4" y="116.5" font-family="Liberation Sans" font-size="6.38" font-weight="normal" letter-spacing="0" fill="#26292c" text-anchor="middle" stroke="#eef2f5" stroke-width="1.1" paint-order="stroke" stroke-linejoin="round">Garmisch-Partenkirchen</text>
<text x="165.1" y="131.5" font-family="Liberation Sans" font-size="7.04" font-weight="normal" letter-spacing="0" fill="#26292c" text-anchor="middle" stroke="#eef2f5" stroke-width="1.1" paint-order="stroke" stroke-linejoin="round">Innsbruck</text>
<text x="216.8" y="111.2" font-family="Liberation Sans" font-size="6.16" font-weight="normal" letter-spacing="0" fill="#26292c" text-anchor="middle" stroke="#eef2f5" stroke-width="1.1" paint-order="stroke" stroke-linejoin="round">Berchtesgaden</text>
<text x="314.6" y="8.0" font-family="Liberation Sans" font-size="6.82" font-weight="normal" letter-spacing="0" fill="#26292c" text-anchor="middle" stroke="#eef2f5" stroke-width="1.1" paint-order="stroke" stroke-linejoin="round">Budejovice</text>
<text x="306.7" y="19.5" font-family="Liberation Sans" font-size="6.38" font-weight="normal" letter-spacing="0" fill="#26292c" text-anchor="middle" stroke="#eef2f5" stroke-width="1.1" paint-order="stroke" stroke-linejoin="round">Cesky Krumlov</text>
<text x="263.0" y="38.0" font-family="Liberation Sans" font-size="6.82" font-weight="normal" letter-spacing="0" fill="#26292c" text-anchor="middle" stroke="#eef2f5" stroke-width="1.1" paint-order="stroke" stroke-linejoin="round">Passau</text>
<text x="292.6" y="68.0" font-family="Liberation Sans" font-size="7.04" font-weight="normal" letter-spacing="0" fill="#26292c" text-anchor="middle" stroke="#eef2f5" stroke-width="1.1" paint-order="stroke" stroke-linejoin="round">Wels</text>
<text x="311.2" y="76.0" font-family="Liberation Sans" font-size="6.16" font-weight="normal" letter-spacing="0" fill="#26292c" text-anchor="middle" stroke="#eef2f5" stroke-width="1.1" paint-order="stroke" stroke-linejoin="round">Steyr</text>
<text x="370.1" y="64.5" font-family="Liberation Sans" font-size="7.04" font-weight="normal" letter-spacing="0" fill="#26292c" text-anchor="middle" stroke="#eef2f5" stroke-width="1.1" paint-order="stroke" stroke-linejoin="round">St Pölten</text>
<text x="398.9" y="87.3" font-family="Liberation Sans" font-size="6.16" font-weight="normal" letter-spacing="0" fill="#26292c" text-anchor="middle" stroke="#eef2f5" stroke-width="1.1" paint-order="stroke" stroke-linejoin="round">Wiener</text>
<text x="398.9" y="94.0" font-family="Liberation Sans" font-size="6.16" font-weight="normal" letter-spacing="0" fill="#26292c" text-anchor="middle" stroke="#eef2f5" stroke-width="1.1" paint-order="stroke" stroke-linejoin="round">Neustadt</text>
<text x="258.5" y="99.0" font-family="Liberation Sans" font-size="7.26" font-weight="normal" letter-spacing="0" fill="#26292c" text-anchor="middle" stroke="#eef2f5" stroke-width="1.1" paint-order="stroke" stroke-linejoin="round">Salzburg</text>
<text x="297.1" y="114.5" font-family="Liberation Sans" font-size="9.46" font-weight="bold" letter-spacing="0.8" fill="#26292c" text-anchor="middle" stroke="#eef2f5" stroke-width="1.1" paint-order="stroke" stroke-linejoin="round">Austria</text>
<text x="416.8" y="111.5" font-family="Liberation Sans" font-size="6.6" font-weight="normal" letter-spacing="0" fill="#26292c" text-anchor="middle" stroke="#eef2f5" stroke-width="1.1" paint-order="stroke" stroke-linejoin="round">Sopron</text>
<text x="418.0" y="134.3" font-family="Liberation Sans" font-size="6.82" font-weight="normal" letter-spacing="0" fill="#26292c" text-anchor="middle" stroke="#eef2f5" stroke-width="1.1" paint-order="stroke" stroke-linejoin="round">Szombathely</text>
<text x="449.4" y="167.8" font-family="Liberation Sans" font-size="6.16" font-weight="normal" letter-spacing="0" fill="#26292c" text-anchor="middle" stroke="#eef2f5" stroke-width="1.1" paint-order="stroke" stroke-linejoin="round">Keszthe</text>
<text x="305.6" y="177.0" font-family="Liberation Sans" font-size="7.04" font-weight="normal" letter-spacing="0" fill="#26292c" text-anchor="middle" stroke="#eef2f5" stroke-width="1.1" paint-order="stroke" stroke-linejoin="round">Klagenfurt</text>
<text x="283.2" y="190.0" font-family="Liberation Sans" font-size="7.04" font-weight="normal" letter-spacing="0" fill="#26292c" text-anchor="middle" stroke="#eef2f5" stroke-width="1.1" paint-order="stroke" stroke-linejoin="round">Villach</text>
<text x="370.3" y="192.6" font-family="Liberation Sans" font-size="7.04" font-weight="normal" letter-spacing="0" fill="#26292c" text-anchor="middle" stroke="#eef2f5" stroke-width="1.1" paint-order="stroke" stroke-linejoin="round">Maribor</text>
<text x="13.0" y="171.5" font-family="Liberation Sans" font-size="9.6" font-weight="bold" letter-spacing="0.7" fill="#26292c" text-anchor="middle" stroke="#eef2f5" stroke-width="1.1" paint-order="stroke" stroke-linejoin="round">erland</text>
<text x="451.0" y="74.3" font-family="Liberation Sans" font-size="7" font-weight="normal" letter-spacing="0" fill="#26292c" text-anchor="middle" stroke="#eef2f5" stroke-width="1.1" paint-order="stroke" stroke-linejoin="round">Bra</text>
<text x="2.0" y="81.5" font-family="Liberation Sans" font-size="6.8" font-weight="normal" letter-spacing="0" fill="#26292c" text-anchor="middle" stroke="#eef2f5" stroke-width="1.1" paint-order="stroke" stroke-linejoin="round">g</text>
<use href="#pin" x="167.5" y="133.5"/>
<use href="#pin" x="165.0" y="133.0"/>
<use href="#pin" x="306.0" y="60.5"/>
<use href="#pin" x="303.5" y="60.2"/>
<use href="#pin" x="250.0" y="95.5"/>
<use href="#pin" x="245.5" y="95.5"/>
<use href="#pin" x="248.0" y="96.0"/>
<use href="#pin" x="414.0" y="60.2"/>
<use href="#pin" x="402.8" y="70.2"/>
<use href="#pin" x="405.8" y="63.7"/>
<use href="#pin" x="411.4" y="69.3"/>
<use href="#pin" x="361.7" y="144.5"/>
<use href="#pin" x="357.3" y="149.0"/>
<use href="#pin" x="363.8" y="147.8"/>
<use href="#pin" x="307.0" y="176.0"/>
<use href="#pin" x="304.5" y="178.7"/>
<rect x="436" y="5" width="15" height="15" fill="#fff"/>
<path d="M440,10.5 v-2.5 h2.5 M444.5,8 h2.5 v2.5 M447,12.5 v2.5 h-2.5 M442.5,15 h-2.5 v-2.5" fill="none" stroke="#555" stroke-width="1.2"/>
<text x="4" y="210" font-family="Liberation Sans" font-size="8.5" fill="#fff" stroke="#8a96a3" stroke-width="0.6" paint-order="stroke" font-weight="bold">Google</text>
<rect x="186" y="207" width="271" height="7" fill="#f5f7f9" opacity="0.7"/>
<text x="189" y="212.60000000000002" font-family="Liberation Sans" font-size="4.8" fill="#444">Map data ©2018 GeoBasis-DE/BKG (©2009), Google, Inst. Geogr. Nacional</text>
<text x="371" y="212.60000000000002" font-family="Liberation Sans" font-size="4.8" fill="#444">Terms of Use</text>
<text x="409" y="212.60000000000002" font-family="Liberation Sans" font-size="4.8" fill="#444">Report a map error</text>
</svg></div>
  <div class="th" style="left:16px;top:270px">Location Name</div>
  <div class="th" style="left:105.5px;top:270px">Connection</div>
  <div class="th" style="left:176px;top:270px">Status</div>
  <div class="th" style="left:221px;top:270px">Errors (last 24h)</div>
  <div class="th" style="left:314.5px;top:270px">Warnings (last 24h)</div>
  <div class="th" style="left:425px;top:270px">Clients</div>
  <div class="tl" style="left:11px;top:283.6px;width:457px"></div>
  <div class="td" style="left:16px;top:290px;color:#3a6fb3">Austria</div>
  <svg class="a" style="left:105.2px;top:288px" width="5" height="13" viewBox="0 0 5 13"><rect x="0" y="0" width="5" height="12.6" rx="0.8" fill="#1a1a1a"/><circle cx="2.5" cy="2.4" r="1.6" fill="#f01010"/><circle cx="2.5" cy="6.3" r="1.4" fill="#6a6a6a"/><circle cx="2.5" cy="10.1" r="1.4" fill="#6a6a6a"/></svg>
  <svg class="a" style="left:175.8px;top:288px" width="5" height="13" viewBox="0 0 5 13"><rect x="0" y="0" width="5" height="12.6" rx="0.8" fill="#1a1a1a"/><circle cx="2.5" cy="2.4" r="1.6" fill="#f01010"/><circle cx="2.5" cy="6.3" r="1.4" fill="#6a6a6a"/><circle cx="2.5" cy="10.1" r="1.4" fill="#6a6a6a"/></svg>
  <div class="td" style="left:221px;top:290px">565</div>
  <div class="td" style="left:314.5px;top:290px">3</div>
  <div class="td" style="left:425px;top:290px">10</div>
</div>

<!-- RECENT ACTIVITIES -->
<div class="panel" style="left:21px;top:373px;width:479px;height:168px">
  <div class="ptitle" style="left:8.5px;top:6.7px">Recent Activities</div>
  <div class="more" style="left:448px;top:8.2px;width:23px;height:8.3px;line-height:9.4px">more</div>
  <div class="phr" style="top:24px"></div>
  <div class="th" style="left:24px;top:37.6px">Date</div>
  <div class="th" style="left:131.5px;top:37.6px">Module</div>
  <div class="th" style="left:278px;top:37.6px">Action</div>
  <div class="th" style="left:380.5px;top:37.6px">User</div>
  <div class="tl" style="left:11px;top:51.0px;width:457px"></div>
  <div class="td" style="left:15.5px;top:57.6px">20.01.2018 21:35:05</div>
  <div class="td" style="left:122.7px;top:57.6px">Client management</div>
  <div class="td" style="left:269.3px;top:57.6px">Edit Client</div>
  <div class="td" style="left:371.9px;top:57.6px">Gerhard Pichler</div>
  <div class="tl" style="left:11px;top:70.1px;width:457px"></div>
  <div class="td" style="left:15.5px;top:76.6px">20.01.2018 21:21:58</div>
  <div class="td" style="left:122.7px;top:76.6px">Privilegegroup management</div>
  <div class="td" style="left:269.3px;top:76.6px">Add Privilegegroup</div>
  <div class="td" style="left:371.9px;top:76.6px">Thomas Neubauer</div>
  <div class="tl" style="left:11px;top:89.2px;width:457px"></div>
  <div class="td" style="left:15.5px;top:95.6px">20.01.2018 21:21:15</div>
  <div class="td" style="left:122.7px;top:95.6px">User management</div>
  <div class="td" style="left:269.3px;top:95.6px">Add User</div>
  <div class="td" style="left:371.9px;top:95.6px">Peter Feldbaumer</div>
  <div class="tl" style="left:11px;top:108.3px;width:457px"></div>
  <div class="td" style="left:15.5px;top:114.6px">20.01.2018 21:20:18</div>
  <div class="td" style="left:122.7px;top:114.6px">Media management</div>
  <div class="td" style="left:269.3px;top:114.6px">Upload File</div>
  <div class="td" style="left:371.9px;top:114.6px">Thomas Neubauer</div>
  <div class="tl" style="left:11px;top:127.4px;width:457px"></div>
  <div class="td" style="left:15.5px;top:133.6px">20.01.2018 21:19:46</div>
  <div class="td" style="left:122.7px;top:133.6px">Privilegegroup management</div>
  <div class="td" style="left:269.3px;top:133.6px">Add Privilegegroup</div>
  <div class="td" style="left:371.9px;top:133.6px">Thomas Neubauer</div>
</div>

<!-- MEDIAPOOL -->
<div class="panel" style="left:516px;top:49px;width:477.8px;height:289px">
  <div class="ptitle" style="left:7.5px;top:8px">Mediapool</div>
  <div class="badge" style="left:49px;top:8px;width:27px;height:9px;line-height:10px">17 Files</div>
  <div class="more" style="left:447px;top:8px;width:22.5px;height:9px">more</div>
  <div class="phr" style="top:24px"></div>
<div class="card" style="left:16.3px;top:38.6px"><svg width="104" height="79" viewBox="0 0 104 79" style="display:block"><rect width="104" height="79" fill="#fff"/><rect x="0" y="4.5" width="104" height="70" fill="#0d2c63"/><g font-family="Liberation Sans" font-weight="bold" font-style="italic" font-size="6.4" fill="#fff" stroke="#fff" stroke-width="0.35"><text x="49.5" y="53.8" textLength="15" lengthAdjust="spacingAndGlyphs">eas</text><text x="66.8" y="53.6" font-size="5" textLength="3.6" lengthAdjust="spacingAndGlyphs">e</text><text x="72" y="53.8" textLength="34" lengthAdjust="spacingAndGlyphs">screen</text></g><rect x="65.4" y="49.6" width="5.6" height="4.6" rx="1.2" fill="none" stroke="#fff" stroke-width="0.8"/><rect x="49.5" y="63.6" width="32" height="1.1" fill="#fff" opacity="0.45"/></svg><div class="cap"><div class="ct">End</div><div class="cd">Added: 19.01.2018, 11:37:46</div></div></div>
<div class="card" style="left:133.4px;top:38.6px"><svg width="104" height="79" viewBox="0 0 104 79" style="display:block"><clipPath id="lc_1"><path d="M0,0 L47.5,0 L31.5,60 Q28,73 20,79 L0,79 Z"/></clipPath><clipPath id="rc_1"><path d="M97,0 L104,0 L104,79 L72,79 L83,22 Q86,5 97,0 Z"/></clipPath><rect width="104" height="79" fill="#fff"/><g clip-path="url(#lc_1)"><rect x="0" y="0" width="48" height="7" fill="#2f3138"/><rect x="13" y="1" width="8" height="4" fill="#b8b8c4"/><rect x="0" y="7" width="48" height="9" fill="#1f2330"/><rect x="1" y="8" width="10" height="6" fill="#7a8898"/><rect x="12" y="8" width="13" height="7" fill="#5a6070"/><rect x="17" y="10" width="5" height="3" fill="#a04050"/><rect x="26" y="8" width="14" height="6" fill="#404656"/><rect x="0" y="16" width="48" height="5" fill="#c4c6cc"/><rect x="0" y="21" width="48" height="19" fill="#55505a"/><rect x="0" y="22" width="6" height="16" fill="#c890c8"/><rect x="6" y="22" width="6" height="16" fill="#404048"/><rect x="12" y="21" width="8" height="18" fill="#d84838"/><rect x="20" y="25" width="9" height="14" fill="#40a0b8"/><rect x="29" y="23" width="11" height="16" fill="#30343c"/><rect x="34" y="36" width="4" height="4" fill="#e8d040"/><rect x="8" y="19" width="6" height="3" fill="#e8e8ec"/><rect x="20" y="20" width="6" height="3" fill="#e0e0e8"/><rect x="0" y="40" width="48" height="7" fill="#3c3f47"/><rect x="0" y="47" width="48" height="21" fill="#2a2c32"/><rect x="1" y="49" width="27" height="17" fill="#e8d890"/><rect x="9" y="53" width="8" height="7" fill="#6a4838"/><rect x="0" y="68" width="48" height="11" fill="#3a3d45"/></g><g clip-path="url(#rc_1)"><rect x="72" y="0" width="32" height="6" fill="#505050"/><rect x="72" y="6" width="32" height="14" fill="#626569"/><rect x="84" y="9" width="14" height="8" fill="#2e3034"/><rect x="72" y="20" width="32" height="20" fill="#5a4030"/><rect x="95" y="27" width="9" height="6" fill="#50a8e8"/><rect x="86" y="33" width="6" height="5" fill="#d0c090"/><rect x="72" y="40" width="32" height="10" fill="#9a9aa0"/><rect x="72" y="50" width="32" height="7" fill="#404448"/><rect x="72" y="57" width="32" height="8" fill="#d8d8dc"/><rect x="72" y="65" width="32" height="7" fill="#a8a0a0"/><rect x="72" y="72" width="32" height="7" fill="#504848"/></g><path d="M47.5,0 L97,0 Q86,5 83,22 L72,79 L20,79 Q28,73 31.5,60 Z" fill="#66a3dc"/><path d="M47.5,-1 L31.5,60 Q28,73 20,80" fill="none" stroke="#fff" stroke-width="1.4"/><path d="M98,-1 Q86,5 83,22 L72,80" fill="none" stroke="#fff" stroke-width="1.4"/><rect x="49" y="9.5" width="11.7" height="1.6" fill="#2a4a7a" opacity="0.8"/><rect x="49.5" y="14.5" width="32" height="0.9" fill="#fff" opacity="0.42"/><rect x="49.0" y="17.1" width="32" height="0.9" fill="#fff" opacity="0.42"/><rect x="48.4" y="19.7" width="32" height="0.9" fill="#fff" opacity="0.42"/><rect x="47.9" y="22.3" width="32" height="0.9" fill="#fff" opacity="0.42"/><rect x="47.3" y="24.9" width="20" height="0.9" fill="#fff" opacity="0.42"/><rect x="46.8" y="27.5" width="32" height="0.9" fill="#fff" opacity="0.42"/><rect x="46.2" y="30.1" width="32" height="0.9" fill="#fff" opacity="0.42"/><rect x="45.6" y="32.7" width="32" height="0.9" fill="#fff" opacity="0.42"/><rect x="37.5" y="62.5" width="4" height="3.2" fill="none" stroke="#fff" stroke-width="0.5" opacity="0.85"/><rect x="42.7" y="62.5" width="4" height="3.2" fill="none" stroke="#fff" stroke-width="0.5" opacity="0.85"/><rect x="47.9" y="62.5" width="4" height="3.2" fill="none" stroke="#fff" stroke-width="0.5" opacity="0.85"/><rect x="53.1" y="62.5" width="4" height="3.2" fill="none" stroke="#fff" stroke-width="0.5" opacity="0.85"/><rect x="35.8" y="68.5" width="4" height="3.2" fill="none" stroke="#fff" stroke-width="0.5" opacity="0.85"/><rect x="41.0" y="68.5" width="4" height="3.2" fill="none" stroke="#fff" stroke-width="0.5" opacity="0.85"/><rect x="46.2" y="68.5" width="4" height="3.2" fill="none" stroke="#fff" stroke-width="0.5" opacity="0.85"/><path d="M51.5,69 l3,0.8 l0,1.6 l-3,-0.8 z" fill="#fff" opacity="0.85"/></svg><div class="cap"><div class="ct">Showcase tourism</div><div class="cd">Added: 19.01.2018, 11:37:43</div></div></div>
<div class="card" style="left:250.5px;top:38.6px"><svg width="104" height="79" viewBox="0 0 104 79" style="display:block"><clipPath id="lc_2"><path d="M0,0 L47.5,0 L31.5,60 Q28,73 20,79 L0,79 Z"/></clipPath><clipPath id="rc_2"><path d="M97,0 L104,0 L104,79 L72,79 L83,22 Q86,5 97,0 Z"/></clipPath><rect width="104" height="79" fill="#fff"/><g clip-path="url(#lc_2)"><rect x="0" y="0" width="48" height="10" fill="#bdb5ac"/><rect x="2" y="3" width="34" height="1.2" fill="#f4f4f4"/><rect x="6" y="7" width="30" height="1.2" fill="#f0f0f0"/><rect x="0" y="10" width="48" height="12" fill="#aaa298"/><rect x="7" y="11" width="27" height="10" fill="#48cc90"/><rect x="12" y="13" width="6" height="4" fill="#d0d070"/><rect x="0" y="22" width="48" height="6" fill="#3a3a42"/><rect x="0" y="28" width="48" height="12" fill="#9c948a"/><rect x="2" y="29" width="28" height="10" fill="#40404a"/><rect x="0" y="40" width="48" height="5" fill="#c8c8c4"/><rect x="0" y="40" width="5" height="5" fill="#4a9a9a"/><rect x="6" y="41" width="7" height="4" fill="#f0f0f0"/><rect x="0" y="45" width="48" height="23" fill="#d6dad6"/><rect x="4" y="45" width="1" height="22" fill="#b0b4b0"/><rect x="14" y="45" width="1" height="22" fill="#b0b4b0"/><rect x="30" y="40" width="10" height="30" fill="#e4e0d6"/><rect x="0" y="68" width="48" height="11" fill="#d8a860"/></g><g clip-path="url(#rc_2)"><rect x="72" y="0" width="32" height="10" fill="#c8a070"/><rect x="72" y="10" width="32" height="15" fill="#e4d4b0"/><rect x="72" y="25" width="32" height="27" fill="#7a9888"/><rect x="87" y="30" width="12" height="15" fill="#406080"/><rect x="89" y="32" width="8" height="10" fill="#50a0a8"/><rect x="72" y="52" width="32" height="27" fill="#e6e8ea"/><rect x="90" y="68" width="14" height="11" fill="#e0b080"/><rect x="80" y="56" width="6" height="14" fill="#a8c4d0"/></g><path d="M47.5,0 L97,0 Q86,5 83,22 L72,79 L20,79 Q28,73 31.5,60 Z" fill="#66a3dc"/><path d="M47.5,-1 L31.5,60 Q28,73 20,80" fill="none" stroke="#fff" stroke-width="1.4"/><path d="M98,-1 Q86,5 83,22 L72,80" fill="none" stroke="#fff" stroke-width="1.4"/><rect x="49" y="9.5" width="23.8" height="1.6" fill="#2a4a7a" opacity="0.8"/><rect x="49.5" y="14.5" width="32" height="0.9" fill="#fff" opacity="0.42"/><rect x="49.0" y="17.1" width="32" height="0.9" fill="#fff" opacity="0.42"/><rect x="48.4" y="19.7" width="32" height="0.9" fill="#fff" opacity="0.42"/><rect x="47.9" y="22.3" width="32" height="0.9" fill="#fff" opacity="0.42"/><rect x="47.3" y="24.9" width="20" height="0.9" fill="#fff" opacity="0.42"/><rect x="46.8" y="27.5" width="32" height="0.9" fill="#fff" opacity="0.42"/><rect x="46.2" y="30.1" width="32" height="0.9" fill="#fff" opacity="0.42"/><rect x="45.6" y="32.7" width="32" height="0.9" fill="#fff" opacity="0.42"/><rect x="45.1" y="35.3" width="32" height="0.9" fill="#fff" opacity="0.42"/><rect x="44.5" y="37.9" width="20" height="0.9" fill="#fff" opacity="0.42"/><rect x="44.0" y="40.5" width="32" height="0.9" fill="#fff" opacity="0.42"/><rect x="43.5" y="43.1" width="32" height="0.9" fill="#fff" opacity="0.42"/><rect x="37.5" y="62.5" width="4" height="3.2" fill="none" stroke="#fff" stroke-width="0.5" opacity="0.85"/><rect x="42.7" y="62.5" width="4" height="3.2" fill="none" stroke="#fff" stroke-width="0.5" opacity="0.85"/><rect x="47.9" y="62.5" width="4" height="3.2" fill="none" stroke="#fff" stroke-width="0.5" opacity="0.85"/><rect x="53.1" y="62.5" width="4" height="3.2" fill="none" stroke="#fff" stroke-width="0.5" opacity="0.85"/><rect x="35.8" y="68.5" width="4" height="3.2" fill="none" stroke="#fff" stroke-width="0.5" opacity="0.85"/><rect x="41.0" y="68.5" width="4" height="3.2" fill="none" stroke="#fff" stroke-width="0.5" opacity="0.85"/><rect x="46.2" y="68.5" width="4" height="3.2" fill="none" stroke="#fff" stroke-width="0.5" opacity="0.85"/><path d="M51.5,69 l3,0.8 l0,1.6 l-3,-0.8 z" fill="#fff" opacity="0.85"/></svg><div class="cap"><div class="ct">Showcase Public</div><div class="cd">Added: 19.01.2018, 11:37:42</div></div></div>
<div class="card" style="left:365.9px;top:37.6px"><svg width="104" height="79" viewBox="0 0 104 79" style="display:block"><clipPath id="lc_3"><path d="M0,0 L47.5,0 L31.5,60 Q28,73 20,79 L0,79 Z"/></clipPath><clipPath id="rc_3"><path d="M97,0 L104,0 L104,79 L72,79 L83,22 Q86,5 97,0 Z"/></clipPath><rect width="104" height="79" fill="#fff"/><g clip-path="url(#lc_3)"><rect x="0" y="0" width="48" height="10" fill="#bdb5ac"/><rect x="2" y="3" width="34" height="1.2" fill="#f4f4f4"/><rect x="6" y="7" width="30" height="1.2" fill="#f0f0f0"/><rect x="0" y="10" width="48" height="12" fill="#aaa298"/><rect x="7" y="11" width="27" height="10" fill="#48cc90"/><rect x="12" y="13" width="6" height="4" fill="#d0d070"/><rect x="0" y="22" width="48" height="6" fill="#3a3a42"/><rect x="0" y="28" width="48" height="12" fill="#9c948a"/><rect x="2" y="29" width="28" height="10" fill="#40404a"/><rect x="0" y="40" width="48" height="5" fill="#c8c8c4"/><rect x="0" y="40" width="5" height="5" fill="#4a9a9a"/><rect x="6" y="41" width="7" height="4" fill="#f0f0f0"/><rect x="0" y="45" width="48" height="23" fill="#d6dad6"/><rect x="4" y="45" width="1" height="22" fill="#b0b4b0"/><rect x="14" y="45" width="1" height="22" fill="#b0b4b0"/><rect x="30" y="40" width="10" height="30" fill="#e4e0d6"/><rect x="0" y="68" width="48" height="11" fill="#d8a860"/></g><g clip-path="url(#rc_3)"><rect x="72" y="0" width="32" height="10" fill="#c8a070"/><rect x="72" y="10" width="32" height="15" fill="#e4d4b0"/><rect x="72" y="25" width="32" height="27" fill="#7a9888"/><rect x="87" y="30" width="12" height="15" fill="#406080"/><rect x="89" y="32" width="8" height="10" fill="#50a0a8"/><rect x="72" y="52" width="32" height="27" fill="#e6e8ea"/><rect x="90" y="68" width="14" height="11" fill="#e0b080"/><rect x="80" y="56" width="6" height="14" fill="#a8c4d0"/></g><path d="M47.5,0 L97,0 Q86,5 83,22 L72,79 L20,79 Q28,73 31.5,60 Z" fill="#66a3dc"/><path d="M47.5,-1 L31.5,60 Q28,73 20,80" fill="none" stroke="#fff" stroke-width="1.4"/><path d="M98,-1 Q86,5 83,22 L72,80" fill="none" stroke="#fff" stroke-width="1.4"/><rect x="49" y="9.5" width="23.8" height="1.6" fill="#2a4a7a" opacity="0.8"/><rect x="49.5" y="14.5" width="32" height="0.9" fill="#fff" opacity="0.42"/><rect x="49.0" y="17.1" width="32" height="0.9" fill="#fff" opacity="0.42"/><rect x="48.4" y="19.7" width="32" height="0.9" fill="#fff" opacity="0.42"/><rect x="47.9" y="22.3" width="32" height="0.9" fill="#fff" opacity="0.42"/><rect x="47.3" y="24.9" width="20" height="0.9" fill="#fff" opacity="0.42"/><rect x="46.8" y="27.5" width="32" height="0.9" fill="#fff" opacity="0.42"/><rect x="46.2" y="30.1" width="32" height="0.9" fill="#fff" opacity="0.42"/><rect x="45.6" y="32.7" width="32" height="0.9" fill="#fff" opacity="0.42"/><rect x="45.1" y="35.3" width="32" height="0.9" fill="#fff" opacity="0.42"/><rect x="44.5" y="37.9" width="20" height="0.9" fill="#fff" opacity="0.42"/><rect x="44.0" y="40.5" width="32" height="0.9" fill="#fff" opacity="0.42"/><rect x="43.5" y="43.1" width="32" height="0.9" fill="#fff" opacity="0.42"/><rect x="37.5" y="62.5" width="4" height="3.2" fill="none" stroke="#fff" stroke-width="0.5" opacity="0.85"/><rect x="42.7" y="62.5" width="4" height="3.2" fill="none" stroke="#fff" stroke-width="0.5" opacity="0.85"/><rect x="47.9" y="62.5" width="4" height="3.2" fill="none" stroke="#fff" stroke-width="0.5" opacity="0.85"/><rect x="53.1" y="62.5" width="4" height="3.2" fill="none" stroke="#fff" stroke-width="0.5" opacity="0.85"/><rect x="35.8" y="68.5" width="4" height="3.2" fill="none" stroke="#fff" stroke-width="0.5" opacity="0.85"/><rect x="41.0" y="68.5" width="4" height="3.2" fill="none" stroke="#fff" stroke-width="0.5" opacity="0.85"/><rect x="46.2" y="68.5" width="4" height="3.2" fill="none" stroke="#fff" stroke-width="0.5" opacity="0.85"/><path d="M51.5,69 l3,0.8 l0,1.6 l-3,-0.8 z" fill="#fff" opacity="0.85"/></svg><div class="cap"><div class="ct">Showcase Public</div><div class="cd">Added: 19.01.2018, 11:37:42</div></div></div>
<div class="card" style="left:16.3px;top:161px"><svg width="104" height="79" viewBox="0 0 104 79" style="display:block"><clipPath id="lc_4"><path d="M0,0 L47.5,0 L31.5,60 Q28,73 20,79 L0,79 Z"/></clipPath><clipPath id="rc_4"><path d="M97,0 L104,0 L104,79 L72,79 L83,22 Q86,5 97,0 Z"/></clipPath><rect width="104" height="79" fill="#fff"/><g clip-path="url(#lc_4)"><rect x="0" y="0" width="48" height="20" fill="#2e90f0"/><rect x="2" y="4" width="10" height="12" fill="#c8b048"/><rect x="4" y="6" width="6" height="8" fill="#2e90f0"/><rect x="16" y="6" width="10" height="8" fill="#1a2080"/><rect x="0" y="20" width="48" height="2" fill="#303034"/><rect x="0" y="22" width="48" height="7" fill="#4a4c54"/><rect x="0" y="29" width="48" height="12" fill="#8c8c8a"/><rect x="8" y="30" width="1.5" height="4" fill="#303030"/><rect x="14" y="31" width="1.5" height="4" fill="#303030"/><rect x="22" y="33" width="1.5" height="4" fill="#303030"/><rect x="34" y="27" width="10" height="14" fill="#5a6070"/><rect x="0" y="41" width="9" height="38" fill="#2a68c8"/><rect x="9" y="41" width="39" height="11" fill="#2a2a36"/><rect x="12" y="43" width="3" height="3" fill="#f0e0a0"/><rect x="9" y="52" width="39" height="6" fill="#3a60b0"/><rect x="9" y="58" width="39" height="8" fill="#303648"/><rect x="11" y="59" width="16" height="6" fill="#4a78c8"/><rect x="9" y="66" width="39" height="5" fill="#d0d0d8"/><rect x="9" y="71" width="39" height="8" fill="#2e3444"/><rect x="0" y="62" width="6" height="17" fill="#38a068"/></g><g clip-path="url(#rc_4)"><rect x="72" y="0" width="32" height="20" fill="#9ccbe8"/><rect x="90" y="2" width="10" height="12" fill="#4a70a0"/><rect x="86" y="10" width="6" height="8" fill="#c05040"/><rect x="72" y="20" width="32" height="18" fill="#6a3a32"/><rect x="88" y="22" width="12" height="8" fill="#c04840"/><rect x="72" y="38" width="32" height="22" fill="#b84232"/><rect x="84" y="40" width="12" height="10" fill="#ece4e4"/><rect x="72" y="60" width="32" height="19" fill="#c8d0b0"/><rect x="78" y="64" width="16" height="8" fill="#78a870"/><rect x="94" y="62" width="10" height="10" fill="#e8e0c0"/></g><path d="M47.5,0 L97,0 Q86,5 83,22 L72,79 L20,79 Q28,73 31.5,60 Z" fill="#66a3dc"/><path d="M47.5,-1 L31.5,60 Q28,73 20,80" fill="none" stroke="#fff" stroke-width="1.4"/><path d="M98,-1 Q86,5 83,22 L72,80" fill="none" stroke="#fff" stroke-width="1.4"/><rect x="49" y="9.5" width="28.0" height="1.6" fill="#2a4a7a" opacity="0.8"/><rect x="49.5" y="14.5" width="32" height="0.9" fill="#fff" opacity="0.42"/><rect x="49.0" y="17.1" width="32" height="0.9" fill="#fff" opacity="0.42"/><rect x="48.4" y="19.7" width="32" height="0.9" fill="#fff" opacity="0.42"/><rect x="47.9" y="22.3" width="32" height="0.9" fill="#fff" opacity="0.42"/><rect x="47.3" y="24.9" width="20" height="0.9" fill="#fff" opacity="0.42"/><rect x="46.8" y="27.5" width="32" height="0.9" fill="#fff" opacity="0.42"/><rect x="46.2" y="30.1" width="32" height="0.9" fill="#fff" opacity="0.42"/><rect x="45.6" y="32.7" width="32" height="0.9" fill="#fff" opacity="0.42"/><rect x="45.1" y="35.3" width="32" height="0.9" fill="#fff" opacity="0.42"/><rect x="44.5" y="37.9" width="20" height="0.9" fill="#fff" opacity="0.42"/><rect x="37.5" y="62.5" width="4" height="3.2" fill="none" stroke="#fff" stroke-width="0.5" opacity="0.85"/><rect x="42.7" y="62.5" width="4" height="3.2" fill="none" stroke="#fff" stroke-width="0.5" opacity="0.85"/><rect x="47.9" y="62.5" width="4" height="3.2" fill="none" stroke="#fff" stroke-width="0.5" opacity="0.85"/><rect x="53.1" y="62.5" width="4" height="3.2" fill="none" stroke="#fff" stroke-width="0.5" opacity="0.85"/><rect x="35.8" y="68.5" width="4" height="3.2" fill="none" stroke="#fff" stroke-width="0.5" opacity="0.85"/><rect x="41.0" y="68.5" width="4" height="3.2" fill="none" stroke="#fff" stroke-width="0.5" opacity="0.85"/><rect x="46.2" y="68.5" width="4" height="3.2" fill="none" stroke="#fff" stroke-width="0.5" opacity="0.85"/><path d="M51.5,69 l3,0.8 l0,1.6 l-3,-0.8 z" fill="#fff" opacity="0.85"/></svg><div class="cap"><div class="ct">Showcase Exhibition</div><div class="cd">Added: 19.01.2018, 11:37:38</div></div></div>
<div class="card" style="left:133.4px;top:161px"><svg width="104" height="79" viewBox="0 0 104 79" style="display:block"><clipPath id="lc_5"><path d="M0,0 L47.5,0 L31.5,60 Q28,73 20,79 L0,79 Z"/></clipPath><clipPath id="rc_5"><path d="M97,0 L104,0 L104,79 L72,79 L83,22 Q86,5 97,0 Z"/></clipPath><rect width="104" height="79" fill="#fff"/><g clip-path="url(#lc_5)"><rect x="0" y="0" width="48" height="12" fill="#3a2820"/><rect x="24" y="0" width="12" height="8" fill="#d8c8a0"/><rect x="2" y="1" width="4" height="3" fill="#e0e8f0"/><rect x="10" y="2" width="6" height="8" fill="#b07040"/><rect x="0" y="12" width="48" height="8" fill="#7a5040"/><rect x="26" y="8" width="6" height="12" fill="#8a3020"/><rect x="14" y="18" width="34" height="22" fill="#9a6a58"/><rect x="0" y="18" width="14" height="22" fill="#5a4038"/><polygon points="-2,24 9,17 30,33 22,42 -2,42" fill="#18181e"/><polygon points="0,25 9,19.5 27,33 21,39.5 0,39.5" fill="#d8e0f0"/><rect x="0" y="25" width="10" height="3" fill="#3a70c0" transform="rotate(-30 5 26)"/><polygon points="22,40 33,28 40,34 36,41" fill="#c49a84"/><rect x="0" y="40" width="48" height="6" fill="#2a1a28"/><rect x="0" y="46" width="48" height="10" fill="#4a3a80"/><rect x="0" y="47.5" width="48" height="7" fill="#c4c4e4" opacity="0.85"/><rect x="0" y="56" width="48" height="6" fill="#d03040"/><rect x="0" y="62" width="48" height="17" fill="#2a2050"/></g><g clip-path="url(#rc_5)"><rect x="72" y="0" width="32" height="12" fill="#d0b890"/><rect x="72" y="12" width="32" height="26" fill="#4c2c32"/><rect x="86" y="14" width="10" height="6" fill="#c03040"/><rect x="90" y="22" width="12" height="10" fill="#4a60a0"/><rect x="72" y="38" width="32" height="22" fill="#a2aaa8"/><rect x="80" y="42" width="12" height="14" fill="#c8d0d0"/><rect x="72" y="60" width="32" height="19" fill="#c0b0c6"/><rect x="88" y="62" width="10" height="17" fill="#3a3a70"/><rect x="76" y="66" width="8" height="10" fill="#d04040"/></g><path d="M47.5,0 L97,0 Q86,5 83,22 L72,79 L20,79 Q28,73 31.5,60 Z" fill="#66a3dc"/><path d="M47.5,-1 L31.5,60 Q28,73 20,80" fill="none" stroke="#fff" stroke-width="1.4"/><path d="M98,-1 Q86,5 83,22 L72,80" fill="none" stroke="#fff" stroke-width="1.4"/><rect x="49" y="9.5" width="11.7" height="1.6" fill="#2a4a7a" opacity="0.8"/><rect x="49.5" y="14.5" width="32" height="0.9" fill="#fff" opacity="0.42"/><rect x="49.0" y="17.1" width="32" height="0.9" fill="#fff" opacity="0.42"/><rect x="48.4" y="19.7" width="32" height="0.9" fill="#fff" opacity="0.42"/><rect x="47.9" y="22.3" width="32" height="0.9" fill="#fff" opacity="0.42"/><rect x="47.3" y="24.9" width="20" height="0.9" fill="#fff" opacity="0.42"/><rect x="46.8" y="27.5" width="32" height="0.9" fill="#fff" opacity="0.42"/><rect x="46.2" y="30.1" width="32" height="0.9" fill="#fff" opacity="0.42"/><rect x="45.6" y="32.7" width="32" height="0.9" fill="#fff" opacity="0.42"/><rect x="45.1" y="35.3" width="32" height="0.9" fill="#fff" opacity="0.42"/><rect x="44.5" y="37.9" width="20" height="0.9" fill="#fff" opacity="0.42"/><rect x="44.0" y="40.5" width="32" height="0.9" fill="#fff" opacity="0.42"/><rect x="43.5" y="43.1" width="32" height="0.9" fill="#fff" opacity="0.42"/><rect x="37.5" y="62.5" width="4" height="3.2" fill="none" stroke="#fff" stroke-width="0.5" opacity="0.85"/><rect x="42.7" y="62.5" width="4" height="3.2" fill="none" stroke="#fff" stroke-width="0.5" opacity="0.85"/><rect x="47.9" y="62.5" width="4" height="3.2" fill="none" stroke="#fff" stroke-width="0.5" opacity="0.85"/><rect x="53.1" y="62.5" width="4" height="3.2" fill="none" stroke="#fff" stroke-width="0.5" opacity="0.85"/><rect x="35.8" y="68.5" width="4" height="3.2" fill="none" stroke="#fff" stroke-width="0.5" opacity="0.85"/><rect x="41.0" y="68.5" width="4" height="3.2" fill="none" stroke="#fff" stroke-width="0.5" opacity="0.85"/><rect x="46.2" y="68.5" width="4" height="3.2" fill="none" stroke="#fff" stroke-width="0.5" opacity="0.85"/><path d="M51.5,69 l3,0.8 l0,1.6 l-3,-0.8 z" fill="#fff" opacity="0.85"/></svg><div class="cap"><div class="ct">Showcase Leisure</div><div class="cd">Added: 19.01.2018, 11:37:38</div></div></div>
<div class="card" style="left:250.5px;top:161px"><svg width="104" height="79" viewBox="0 0 104 79" style="display:block"><clipPath id="lc_6"><path d="M0,0 L47.5,0 L31.5,60 Q28,73 20,79 L0,79 Z"/></clipPath><clipPath id="rc_6"><path d="M97,0 L104,0 L104,79 L72,79 L83,22 Q86,5 97,0 Z"/></clipPath><rect width="104" height="79" fill="#fff"/><g clip-path="url(#lc_6)"><rect x="0" y="0" width="48" height="5" fill="#5a3a28"/><rect x="0" y="5" width="48" height="20" fill="#7a6a50"/><rect x="0" y="5" width="6" height="20" fill="#d0d8d0"/><rect x="6" y="6" width="8" height="8" fill="#c0d0c0"/><rect x="20" y="6" width="10" height="8" fill="#b0c0b0"/><rect x="8" y="12" width="5" height="12" fill="#d83030"/><rect x="13" y="14" width="17" height="11" fill="#3a2a20"/><rect x="31" y="10" width="5" height="18" fill="#7a8898"/><rect x="38" y="8" width="10" height="17" fill="#c8c8c0"/><rect x="0" y="25" width="48" height="3" fill="#c8b890"/><rect x="6" y="25" width="30" height="3" fill="#b02828"/><rect x="0" y="28" width="48" height="13" fill="#c8b890"/><rect x="6" y="31" width="28" height="9" fill="#8a8878"/><rect x="13" y="35" width="11" height="2" fill="#2a8a3a"/><rect x="0" y="41" width="48" height="31" fill="#e6e6e6"/><rect x="15" y="42" width="5" height="3" fill="#202020"/><rect x="0" y="72" width="48" height="7" fill="#f2f2f2"/><polygon points="0,62 40,48 40,53 0,70" fill="#7a3a20"/><polygon points="2,63 14,58.5 14,66 2,69" fill="#c8d0d0"/><polygon points="17,57.5 36,51 36,58 17,64" fill="#d4dada"/></g><g clip-path="url(#rc_6)"><rect x="72" y="0" width="32" height="25" fill="#dde6ee"/><rect x="80" y="0" width="24" height="6" fill="#a8c0d8"/><rect x="86" y="6" width="3" height="18" fill="#c06434"/><rect x="92" y="8" width="3" height="14" fill="#c06434"/><rect x="72" y="25" width="32" height="25" fill="#c8a886"/><rect x="88" y="29" width="11" height="16" fill="#1e5a9e"/><rect x="89" y="31" width="9" height="12" fill="#60a0d8"/><rect x="72" y="50" width="32" height="18" fill="#e8e8e8"/><rect x="90" y="54" width="12" height="8" fill="#f0f0e0"/><rect x="72" y="68" width="32" height="11" fill="#e08454"/><rect x="88" y="70" width="16" height="9" fill="#a0a0a0"/></g><path d="M47.5,0 L97,0 Q86,5 83,22 L72,79 L20,79 Q28,73 31.5,60 Z" fill="#66a3dc"/><path d="M47.5,-1 L31.5,60 Q28,73 20,80" fill="none" stroke="#fff" stroke-width="1.4"/><path d="M98,-1 Q86,5 83,22 L72,80" fill="none" stroke="#fff" stroke-width="1.4"/><rect x="49" y="9.5" width="15.0" height="1.6" fill="#2a4a7a" opacity="0.8"/><rect x="49.5" y="14.5" width="32" height="0.9" fill="#fff" opacity="0.42"/><rect x="49.0" y="17.1" width="32" height="0.9" fill="#fff" opacity="0.42"/><rect x="48.4" y="19.7" width="32" height="0.9" fill="#fff" opacity="0.42"/><rect x="47.9" y="22.3" width="32" height="0.9" fill="#fff" opacity="0.42"/><rect x="47.3" y="24.9" width="20" height="0.9" fill="#fff" opacity="0.42"/><rect x="46.8" y="27.5" width="32" height="0.9" fill="#fff" opacity="0.42"/><rect x="46.2" y="30.1" width="32" height="0.9" fill="#fff" opacity="0.42"/><rect x="45.6" y="32.7" width="32" height="0.9" fill="#fff" opacity="0.42"/><rect x="45.1" y="35.3" width="32" height="0.9" fill="#fff" opacity="0.42"/><rect x="44.5" y="37.9" width="20" height="0.9" fill="#fff" opacity="0.42"/><rect x="37.5" y="62.5" width="4" height="3.2" fill="none" stroke="#fff" stroke-width="0.5" opacity="0.85"/><rect x="42.7" y="62.5" width="4" height="3.2" fill="none" stroke="#fff" stroke-width="0.5" opacity="0.85"/><rect x="47.9" y="62.5" width="4" height="3.2" fill="none" stroke="#fff" stroke-width="0.5" opacity="0.85"/><rect x="53.1" y="62.5" width="4" height="3.2" fill="none" stroke="#fff" stroke-width="0.5" opacity="0.85"/><rect x="35.8" y="68.5" width="4" height="3.2" fill="none" stroke="#fff" stroke-width="0.5" opacity="0.85"/><rect x="41.0" y="68.5" width="4" height="3.2" fill="none" stroke="#fff" stroke-width="0.5" opacity="0.85"/><rect x="46.2" y="68.5" width="4" height="3.2" fill="none" stroke="#fff" stroke-width="0.5" opacity="0.85"/><path d="M51.5,69 l3,0.8 l0,1.6 l-3,-0.8 z" fill="#fff" opacity="0.85"/></svg><div class="cap"><div class="ct">Showcase healthcare</div><div class="cd">Added: 19.01.2018, 11:37:35</div></div></div>
<div class="card" style="left:365.9px;top:160px"><svg width="104" height="79" viewBox="0 0 104 79" style="display:block"><clipPath id="lc_7"><path d="M0,0 L47.5,0 L31.5,60 Q28,73 20,79 L0,79 Z"/></clipPath><clipPath id="rc_7"><path d="M97,0 L104,0 L104,79 L72,79 L83,22 Q86,5 97,0 Z"/></clipPath><rect width="104" height="79" fill="#fff"/><g clip-path="url(#lc_7)"><rect x="0" y="0" width="48" height="5" fill="#5a3a28"/><rect x="0" y="5" width="48" height="20" fill="#7a6a50"/><rect x="0" y="5" width="6" height="20" fill="#d0d8d0"/><rect x="6" y="6" width="8" height="8" fill="#c0d0c0"/><rect x="20" y="6" width="10" height="8" fill="#b0c0b0"/><rect x="8" y="12" width="5" height="12" fill="#d83030"/><rect x="13" y="14" width="17" height="11" fill="#3a2a20"/><rect x="31" y="10" width="5" height="18" fill="#7a8898"/><rect x="38" y="8" width="10" height="17" fill="#c8c8c0"/><rect x="0" y="25" width="48" height="3" fill="#c8b890"/><rect x="6" y="25" width="30" height="3" fill="#b02828"/><rect x="0" y="28" width="48" height="13" fill="#c8b890"/><rect x="6" y="31" width="28" height="9" fill="#8a8878"/><rect x="13" y="35" width="11" height="2" fill="#2a8a3a"/><rect x="0" y="41" width="48" height="31" fill="#e6e6e6"/><rect x="15" y="42" width="5" height="3" fill="#202020"/><rect x="0" y="72" width="48" height="7" fill="#f2f2f2"/><polygon points="0,62 40,48 40,53 0,70" fill="#7a3a20"/><polygon points="2,63 14,58.5 14,66 2,69" fill="#c8d0d0"/><polygon points="17,57.5 36,51 36,58 17,64" fill="#d4dada"/></g><g clip-path="url(#rc_7)"><rect x="72" y="0" width="32" height="25" fill="#dde6ee"/><rect x="80" y="0" width="24" height="6" fill="#a8c0d8"/><rect x="86" y="6" width="3" height="18" fill="#c06434"/><rect x="92" y="8" width="3" height="14" fill="#c06434"/><rect x="72" y="25" width="32" height="25" fill="#c8a886"/><rect x="88" y="29" width="11" height="16" fill="#1e5a9e"/><rect x="89" y="31" width="9" height="12" fill="#60a0d8"/><rect x="72" y="50" width="32" height="18" fill="#e8e8e8"/><rect x="90" y="54" width="12" height="8" fill="#f0f0e0"/><rect x="72" y="68" width="32" height="11" fill="#e08454"/><rect x="88" y="70" width="16" height="9" fill="#a0a0a0"/></g><path d="M47.5,0 L97,0 Q86,5 83,22 L72,79 L20,79 Q28,73 31.5,60 Z" fill="#66a3dc"/><path d="M47.5,-1 L31.5,60 Q28,73 20,80" fill="none" stroke="#fff" stroke-width="1.4"/><path d="M98,-1 Q86,5 83,22 L72,80" fill="none" stroke="#fff" stroke-width="1.4"/><rect x="49" y="9.5" width="15.0" height="1.6" fill="#2a4a7a" opacity="0.8"/><rect x="49.5" y="14.5" width="32" height="0.9" fill="#fff" opacity="0.42"/><rect x="49.0" y="17.1" width="32" height="0.9" fill="#fff" opacity="0.42"/><rect x="48.4" y="19.7" width="32" height="0.9" fill="#fff" opacity="0.42"/><rect x="47.9" y="22.3" width="32" height="0.9" fill="#fff" opacity="0.42"/><rect x="47.3" y="24.9" width="20" height="0.9" fill="#fff" opacity="0.42"/><rect x="46.8" y="27.5" width="32" height="0.9" fill="#fff" opacity="0.42"/><rect x="46.2" y="30.1" width="32" height="0.9" fill="#fff" opacity="0.42"/><rect x="45.6" y="32.7" width="32" height="0.9" fill="#fff" opacity="0.42"/><rect x="45.1" y="35.3" width="32" height="0.9" fill="#fff" opacity="0.42"/><rect x="44.5" y="37.9" width="20" height="0.9" fill="#fff" opacity="0.42"/><rect x="37.5" y="62.5" width="4" height="3.2" fill="none" stroke="#fff" stroke-width="0.5" opacity="0.85"/><rect x="42.7" y="62.5" width="4" height="3.2" fill="none" stroke="#fff" stroke-width="0.5" opacity="0.85"/><rect x="47.9" y="62.5" width="4" height="3.2" fill="none" stroke="#fff" stroke-width="0.5" opacity="0.85"/><rect x="53.1" y="62.5" width="4" height="3.2" fill="none" stroke="#fff" stroke-width="0.5" opacity="0.85"/><rect x="35.8" y="68.5" width="4" height="3.2" fill="none" stroke="#fff" stroke-width="0.5" opacity="0.85"/><rect x="41.0" y="68.5" width="4" height="3.2" fill="none" stroke="#fff" stroke-width="0.5" opacity="0.85"/><rect x="46.2" y="68.5" width="4" height="3.2" fill="none" stroke="#fff" stroke-width="0.5" opacity="0.85"/><path d="M51.5,69 l3,0.8 l0,1.6 l-3,-0.8 z" fill="#fff" opacity="0.85"/></svg><div class="cap"><div class="ct">Showcase healthcare</div><div class="cd">Added: 19.01.2018, 11:37:35</div></div></div>
</div>

<!-- FOOTER -->
<div id="footer">
  <svg class="a" style="left:0;top:0" width="170" height="21" viewBox="0 0 170 21">
    <g font-family="Liberation Sans" font-weight="bold" font-style="italic" font-size="11.6" fill="#0d2c63" stroke="#0d2c63" stroke-width="0.7">
    <text x="22.3" y="15.2" textLength="39.5" lengthAdjust="spacingAndGlyphs">eas</text>
    <text x="66" y="14.7" font-size="8.4" textLength="9.5" lengthAdjust="spacingAndGlyphs">e</text>
    <text x="80.5" y="15.2" textLength="77.7" lengthAdjust="spacingAndGlyphs">screen</text>
    </g>
    <rect x="63" y="9.2" width="16.2" height="6.6" rx="2.2" fill="none" stroke="#0d2c63" stroke-width="1.4" transform="skewX(-10) translate(1.8,0)"/>
  </svg>
  <div class="a" style="left:172px;top:7.2px;font-size:7.05px;color:#555">easescreen Web.Interface v1.0.0-CC © 2016 - 2018</div>
  <div class="a" style="left:944.8px;top:7.2px;font-size:7.05px;color:#555">8% System Load.</div>
  <svg class="a" style="left:931px;top:7px" width="11" height="8" viewBox="0 0 11 8"><path d="M1.2,7.4 A4.7,4.7 0 1,1 9.8,7.4 Z" fill="#3a3a3a"/><circle cx="5.5" cy="4.8" r="1" fill="#fff"/><path d="M5.5,4.8 L7.6,2.4" stroke="#fff" stroke-width="0.8"/><circle cx="2.4" cy="4.6" r="0.6" fill="#fff"/><circle cx="3.4" cy="2.4" r="0.6" fill="#fff"/><circle cx="5.5" cy="1.6" r="0.6" fill="#fff"/><circle cx="8.6" cy="4.6" r="0.6" fill="#fff"/></svg>
</div>

</body></html>
